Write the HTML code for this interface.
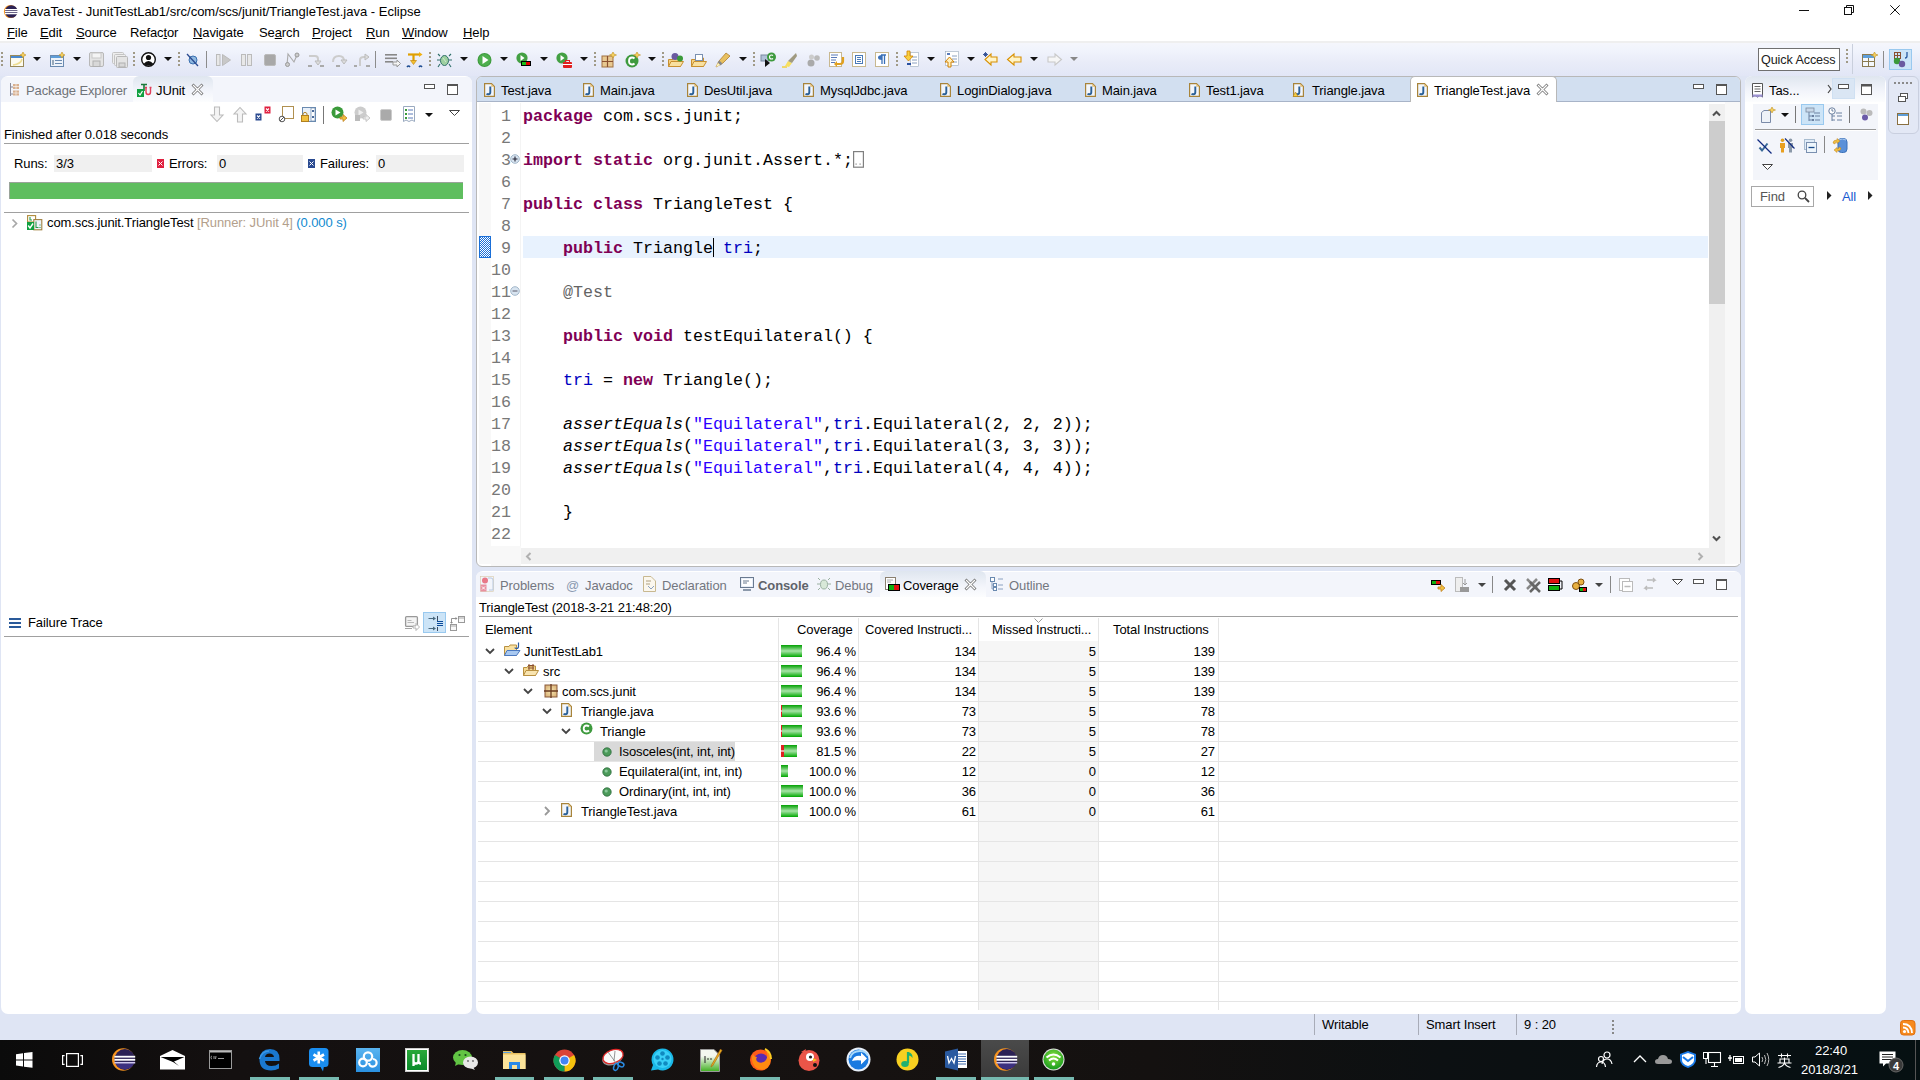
<!DOCTYPE html>
<html><head><meta charset="utf-8"><title>Eclipse</title>
<style>
*{margin:0;padding:0;box-sizing:border-box}
html,body{width:1920px;height:1080px;overflow:hidden;background:#dfe5f4;font-family:"Liberation Sans",sans-serif;font-size:13px;color:#000}
.a{position:absolute}
svg.a{overflow:visible}
.t{position:absolute;white-space:nowrap;line-height:16px;letter-spacing:-0.1px}
u{text-decoration:underline;text-underline-offset:1px}
.code{position:absolute;font-family:"Liberation Mono",monospace;font-size:16.67px;line-height:22px;white-space:pre;color:#000}
.ln{position:absolute;font-family:"Liberation Mono",monospace;font-size:16.67px;line-height:22px;color:#787878;white-space:pre;text-align:right}
.kw{color:#7f0055;font-weight:bold}
.fld{color:#0000c0}
.str{color:#2a00ff}
.it{font-style:italic}
.ann{color:#646464}
</style></head><body>
<div class="a" style="left:0px;top:0px;width:1920px;height:22px;background:#fff"></div>
<div class="a" style="left:0px;top:22px;width:1920px;height:19px;background:#fff"></div>
<svg class="a" style="left:3px;top:5px" width="16" height="14" viewBox="0 0 16 14"><circle cx="7.5" cy="6.5" r="6.6" fill="#f7941e"/><circle cx="8.3" cy="6.5" r="6.3" fill="#2c2255"/>
<rect x="2" y="4" width="13" height="1.3" fill="#fff"/><rect x="2" y="6" width="13" height="1.3" fill="#fff"/><rect x="2" y="8" width="13" height="1.3" fill="#fff"/></svg>
<div class="t" style="left:23px;top:4px;font-size:13px;line-height:16px;color:#000;font-family:'Liberation Sans',sans-serif;letter-spacing:0">JavaTest - JunitTestLab1/src/com/scs/junit/TriangleTest.java - Eclipse</div>
<div class="a" style="left:1799px;top:10px;width:10px;height:1px;background:#111"></div>
<svg class="a" style="left:1843px;top:4px" width="12" height="12" viewBox="0 0 12 12"><rect x="1.5" y="3.5" width="7" height="7" fill="none" stroke="#111"/><path fill="none" d="M3.5 3.5V1.5H10.5V8.5H8.5" stroke="#111"/></svg>
<svg class="a" style="left:1890px;top:5px" width="10" height="10" viewBox="0 0 10 10"><path fill="none" d="M0.3 0.3L9.7 9.7M9.7 0.3L0.3 9.7" stroke="#111" stroke-width="1"/></svg>
<div class="t" style="left:7px;top:25px;font-size:13px;line-height:16px;color:#000;font-family:'Liberation Sans',sans-serif;"><u>F</u>ile</div>
<div class="t" style="left:40px;top:25px;font-size:13px;line-height:16px;color:#000;font-family:'Liberation Sans',sans-serif;"><u>E</u>dit</div>
<div class="t" style="left:76px;top:25px;font-size:13px;line-height:16px;color:#000;font-family:'Liberation Sans',sans-serif;"><u>S</u>ource</div>
<div class="t" style="left:130px;top:25px;font-size:13px;line-height:16px;color:#000;font-family:'Liberation Sans',sans-serif;">Refac<u>t</u>or</div>
<div class="t" style="left:193px;top:25px;font-size:13px;line-height:16px;color:#000;font-family:'Liberation Sans',sans-serif;"><u>N</u>avigate</div>
<div class="t" style="left:259px;top:25px;font-size:13px;line-height:16px;color:#000;font-family:'Liberation Sans',sans-serif;">Se<u>a</u>rch</div>
<div class="t" style="left:312px;top:25px;font-size:13px;line-height:16px;color:#000;font-family:'Liberation Sans',sans-serif;"><u>P</u>roject</div>
<div class="t" style="left:366px;top:25px;font-size:13px;line-height:16px;color:#000;font-family:'Liberation Sans',sans-serif;"><u>R</u>un</div>
<div class="t" style="left:402px;top:25px;font-size:13px;line-height:16px;color:#000;font-family:'Liberation Sans',sans-serif;"><u>W</u>indow</div>
<div class="t" style="left:463px;top:25px;font-size:13px;line-height:16px;color:#000;font-family:'Liberation Sans',sans-serif;"><u>H</u>elp</div>
<div class="a" style="left:0px;top:41px;width:1920px;height:35px;background:linear-gradient(#f6f7fc 0%,#f0f3fc 30%,#e9ecf8 60%,#e2e6f6 100%)"></div>
<div class="a" style="left:0px;top:41px;width:1920px;height:2px;background:#efefef"></div>
<svg class="a" style="left:1px;top:52px" width="2" height="15" viewBox="0 0 2 15"><rect x="0" y="0" width="2" height="2" fill="#a09a86"/><rect x="0" y="4" width="2" height="2" fill="#a09a86"/><rect x="0" y="8" width="2" height="2" fill="#a09a86"/><rect x="0" y="12" width="2" height="2" fill="#a09a86"/></svg>
<svg class="a" style="left:133px;top:52px" width="2" height="15" viewBox="0 0 2 15"><rect x="0" y="0" width="2" height="2" fill="#a09a86"/><rect x="0" y="4" width="2" height="2" fill="#a09a86"/><rect x="0" y="8" width="2" height="2" fill="#a09a86"/><rect x="0" y="12" width="2" height="2" fill="#a09a86"/></svg>
<svg class="a" style="left:178px;top:52px" width="2" height="15" viewBox="0 0 2 15"><rect x="0" y="0" width="2" height="2" fill="#a09a86"/><rect x="0" y="4" width="2" height="2" fill="#a09a86"/><rect x="0" y="8" width="2" height="2" fill="#a09a86"/><rect x="0" y="12" width="2" height="2" fill="#a09a86"/></svg>
<svg class="a" style="left:429px;top:52px" width="2" height="15" viewBox="0 0 2 15"><rect x="0" y="0" width="2" height="2" fill="#a09a86"/><rect x="0" y="4" width="2" height="2" fill="#a09a86"/><rect x="0" y="8" width="2" height="2" fill="#a09a86"/><rect x="0" y="12" width="2" height="2" fill="#a09a86"/></svg>
<svg class="a" style="left:594px;top:52px" width="2" height="15" viewBox="0 0 2 15"><rect x="0" y="0" width="2" height="2" fill="#a09a86"/><rect x="0" y="4" width="2" height="2" fill="#a09a86"/><rect x="0" y="8" width="2" height="2" fill="#a09a86"/><rect x="0" y="12" width="2" height="2" fill="#a09a86"/></svg>
<svg class="a" style="left:662px;top:52px" width="2" height="15" viewBox="0 0 2 15"><rect x="0" y="0" width="2" height="2" fill="#a09a86"/><rect x="0" y="4" width="2" height="2" fill="#a09a86"/><rect x="0" y="8" width="2" height="2" fill="#a09a86"/><rect x="0" y="12" width="2" height="2" fill="#a09a86"/></svg>
<svg class="a" style="left:753px;top:52px" width="2" height="15" viewBox="0 0 2 15"><rect x="0" y="0" width="2" height="2" fill="#a09a86"/><rect x="0" y="4" width="2" height="2" fill="#a09a86"/><rect x="0" y="8" width="2" height="2" fill="#a09a86"/><rect x="0" y="12" width="2" height="2" fill="#a09a86"/></svg>
<svg class="a" style="left:896px;top:52px" width="2" height="15" viewBox="0 0 2 15"><rect x="0" y="0" width="2" height="2" fill="#a09a86"/><rect x="0" y="4" width="2" height="2" fill="#a09a86"/><rect x="0" y="8" width="2" height="2" fill="#a09a86"/><rect x="0" y="12" width="2" height="2" fill="#a09a86"/></svg>
<div class="a" style="left:206px;top:51px;width:1px;height:17px;background:#8c8c8c"></div>
<div class="a" style="left:375px;top:51px;width:1px;height:17px;background:#8c8c8c"></div>
<svg class="a" style="left:33px;top:57px" width="8" height="5" viewBox="0 0 8 5"><path d="M0 0H8L4 4Z" fill="#111"/></svg>
<svg class="a" style="left:73px;top:57px" width="8" height="5" viewBox="0 0 8 5"><path d="M0 0H8L4 4Z" fill="#111"/></svg>
<svg class="a" style="left:164px;top:57px" width="8" height="5" viewBox="0 0 8 5"><path d="M0 0H8L4 4Z" fill="#111"/></svg>
<svg class="a" style="left:460px;top:57px" width="8" height="5" viewBox="0 0 8 5"><path d="M0 0H8L4 4Z" fill="#111"/></svg>
<svg class="a" style="left:500px;top:57px" width="8" height="5" viewBox="0 0 8 5"><path d="M0 0H8L4 4Z" fill="#111"/></svg>
<svg class="a" style="left:540px;top:57px" width="8" height="5" viewBox="0 0 8 5"><path d="M0 0H8L4 4Z" fill="#111"/></svg>
<svg class="a" style="left:580px;top:57px" width="8" height="5" viewBox="0 0 8 5"><path d="M0 0H8L4 4Z" fill="#111"/></svg>
<svg class="a" style="left:648px;top:57px" width="8" height="5" viewBox="0 0 8 5"><path d="M0 0H8L4 4Z" fill="#111"/></svg>
<svg class="a" style="left:739px;top:57px" width="8" height="5" viewBox="0 0 8 5"><path d="M0 0H8L4 4Z" fill="#111"/></svg>
<svg class="a" style="left:927px;top:57px" width="8" height="5" viewBox="0 0 8 5"><path d="M0 0H8L4 4Z" fill="#111"/></svg>
<svg class="a" style="left:967px;top:57px" width="8" height="5" viewBox="0 0 8 5"><path d="M0 0H8L4 4Z" fill="#111"/></svg>
<svg class="a" style="left:1030px;top:57px" width="8" height="5" viewBox="0 0 8 5"><path d="M0 0H8L4 4Z" fill="#111"/></svg>
<svg class="a" style="left:1070px;top:57px" width="8" height="5" viewBox="0 0 8 5"><path d="M0 0H8L4 4Z" fill="#888"/></svg>
<svg class="a" style="left:10px;top:52px" width="16" height="16" viewBox="0 0 16 16"><rect x="0.5" y="3.5" width="13" height="11" fill="#fdfbf0" stroke="#9a8a5a"/><rect x="1" y="4" width="12" height="2" fill="#4a8ad0"/><path d="M13 0L14.2 2.3L16 3L14.2 3.7L13 6L11.8 3.7L10 3L11.8 2.3Z" fill="#f5d060" stroke="#c09020" stroke-width="0.6"/><path d="M3 13Q11 12 12 7" stroke="#eedc90" fill="none" stroke-width="1.5"/></svg>
<svg class="a" style="left:50px;top:52px" width="16" height="16" viewBox="0 0 16 16"><rect x="0.5" y="3.5" width="13" height="11" fill="#eef3fa" stroke="#6a8ab0"/><rect x="1" y="4" width="12" height="2" fill="#5f9ed8"/><rect x="5" y="8" width="7" height="1" fill="#6a8ab0"/><rect x="5" y="11" width="7" height="1" fill="#6a8ab0"/><rect x="2" y="8" width="2" height="5" fill="#9ab"/><path d="M12 0L13.2 2.3L15 3L13.2 3.7L12 6L10.8 3.7L9 3L10.8 2.3Z" fill="#f5d060" stroke="#c09020" stroke-width="0.6"/></svg>
<svg class="a" style="left:89px;top:52px" width="16" height="16" viewBox="0 0 16 16"><rect x="0.5" y="0.5" width="14" height="14" rx="1.5" fill="#e4e4e4" stroke="#b8b8b8"/><rect x="3" y="1" width="9" height="5" fill="#f4f4f4" stroke="#c8c8c8"/><rect x="4" y="9" width="7" height="5.5" fill="#d8d8d8" stroke="#b0b0b0"/></svg>
<svg class="a" style="left:112px;top:52px" width="16" height="16" viewBox="0 0 16 16"><rect x="0.5" y="0.5" width="11" height="11" rx="1" fill="#eee" stroke="#c4c4c4"/><rect x="2.5" y="2.5" width="11" height="11" rx="1" fill="#eee" stroke="#c4c4c4"/><rect x="4.5" y="4.5" width="11" height="11" rx="1" fill="#e4e4e4" stroke="#b8b8b8"/><rect x="7" y="11" width="6" height="4" fill="#d8d8d8" stroke="#b0b0b0"/></svg>
<svg class="a" style="left:141px;top:52px" width="16" height="16" viewBox="0 0 16 16"><circle cx="7.5" cy="7.5" r="6.8" fill="#fff" stroke="#111" stroke-width="1.4"/><circle cx="7.5" cy="5.5" r="2.6" fill="#111"/><path d="M2.5 12Q7.5 6 12.5 12Q7.5 15.5 2.5 12Z" fill="#111"/></svg>
<svg class="a" style="left:186px;top:52px" width="14" height="16" viewBox="0 0 14 16"><circle cx="7" cy="8" r="4" fill="#8fb8e0" stroke="#3a70b0"/><path fill="none" d="M1 2L12 14" stroke="#2a4a90" stroke-width="1.3"/></svg>
<svg class="a" style="left:216px;top:53px" width="16" height="14" viewBox="0 0 16 14"><rect x="0.5" y="1.5" width="3.5" height="11" fill="#e8e8e8" stroke="#bbb"/><path d="M6.5 1.5L14.5 7L6.5 12.5Z" fill="#c8c8c8" stroke="#bbb"/></svg>
<svg class="a" style="left:241px;top:53px" width="12" height="14" viewBox="0 0 12 14"><rect x="0.5" y="1.5" width="4" height="11" fill="#e8e8e8" stroke="#bbb"/><rect x="6.5" y="1.5" width="4" height="11" fill="#e8e8e8" stroke="#bbb"/></svg>
<svg class="a" style="left:264px;top:53px" width="12" height="14" viewBox="0 0 12 14"><rect x="0.5" y="1.5" width="11" height="11" rx="1.5" fill="#a8a8a8" stroke="#bbb"/></svg>
<svg class="a" style="left:285px;top:52px" width="15" height="15" viewBox="0 0 15 15"><path d="M2 13L3 2L9 10L12 3" stroke="#aaa" fill="none" stroke-width="1.1"/><circle cx="2.5" cy="12.5" r="2" fill="#ccc" stroke="#999"/><circle cx="12" cy="3" r="2" fill="#ccc" stroke="#999"/></svg>
<svg class="a" style="left:308px;top:53px" width="16" height="14" viewBox="0 0 16 14"><path d="M1 3H7Q10 3 10 6V9" stroke="#ccc" fill="none" stroke-width="2"/><path d="M7 8L10 12L13 8Z" fill="#ddd" stroke="#bbb"/><rect x="0" y="12" width="4" height="2" fill="#aaa"/><rect x="12" y="12" width="4" height="2" fill="#aaa"/></svg>
<svg class="a" style="left:331px;top:53px" width="16" height="14" viewBox="0 0 16 14"><path d="M2 9Q2 3 8 3Q13 3 13 8" stroke="#ccc" fill="none" stroke-width="2"/><path d="M10 7L13 11L16 7Z" fill="#ddd" stroke="#bbb"/><rect x="5" y="12" width="4" height="2" fill="#aaa"/></svg>
<svg class="a" style="left:354px;top:53px" width="16" height="14" viewBox="0 0 16 14"><path d="M6 13V7Q6 4 10 4H12" stroke="#ccc" fill="none" stroke-width="2"/><path d="M11 1L15 4L11 7Z" fill="#ddd" stroke="#bbb"/><rect x="0" y="12" width="3" height="2" fill="#aaa"/><rect x="12" y="12" width="4" height="2" fill="#aaa"/></svg>
<svg class="a" style="left:385px;top:52px" width="16" height="16" viewBox="0 0 16 16"><rect x="0" y="2" width="12" height="1.6" fill="#888"/><rect x="0" y="5.5" width="12" height="1.6" fill="#888"/><rect x="0" y="9" width="8" height="1.6" fill="#888"/><path d="M8 10H12V8L15.5 11.5L12 15V13H8Z" fill="#f4f4f4" stroke="#999"/></svg>
<svg class="a" style="left:407px;top:52px" width="16" height="16" viewBox="0 0 16 16"><path fill="none" d="M1 2.5H12" stroke="#e0a000" stroke-width="2.2"/><path d="M12 0L15.5 2.5L12 5Z" fill="#f0b010"/><path fill="none" d="M6.5 2.5V10" stroke="#e0a000" stroke-width="2.2"/><path d="M3.5 8.5H9.5L6.5 12.5Z" fill="#f4c030" stroke="#c08000" stroke-width="0.6"/><path d="M0 15Q1.5 13 3 15M12 15Q13.5 13 15 15" stroke="#1a4a90" stroke-width="1.5" fill="none"/></svg>
<svg class="a" style="left:437px;top:52px" width="16" height="16" viewBox="0 0 16 16"><ellipse cx="7.5" cy="8.5" rx="4" ry="5" fill="#9ed0a0" stroke="#2f6f6a"/><path fill="none" d="M3 4L1 2M12 4L14 2M3 8H0M12 8H15M3 12L1 15M12 12L14 15" stroke="#2f6f6a" stroke-width="1.1"/><path fill="none" d="M6 6L9 10" stroke="#cfe8cf"/></svg>
<svg class="a" style="left:477px;top:52px" width="16" height="16" viewBox="0 0 16 16"><circle cx="7.5" cy="8" r="7" fill="#3d9a3d"/><circle cx="7.5" cy="8" r="6" fill="#4eaf4e"/><path d="M5.5 4L11.5 8L5.5 12Z" fill="#fff"/></svg>
<svg class="a" style="left:516px;top:52px" width="16" height="16" viewBox="0 0 16 16"><circle cx="6" cy="6" r="5.6" fill="#43a043"/><path d="M4.5 3L8.5 6L4.5 9Z" fill="#fff"/><rect x="5" y="9" width="10" height="5" fill="#000"/><rect x="6" y="10" width="4" height="3" fill="#19c019"/><rect x="10" y="10" width="4" height="3" fill="#e00000"/></svg>
<svg class="a" style="left:556px;top:52px" width="16" height="16" viewBox="0 0 16 16"><circle cx="6" cy="6" r="5.6" fill="#43a043"/><path d="M4.5 3L8.5 6L4.5 9Z" fill="#fff"/><rect x="7" y="10" width="9" height="6" rx="1" fill="#e02020"/><rect x="9.5" y="8.5" width="4" height="2" fill="none" stroke="#e02020"/><rect x="7" y="12" width="9" height="1" fill="#fff"/></svg>
<svg class="a" style="left:601px;top:52px" width="16" height="16" viewBox="0 0 16 16"><rect x="1" y="4" width="11" height="11" fill="#e8c890" stroke="#a07040"/><path fill="none" d="M1 9.5H12M6.5 4V15" stroke="#8a5030" stroke-width="1.2"/><path d="M12 0L13.3 2.3L15.5 3L13.3 3.7L12 6L10.7 3.7L8.5 3L10.7 2.3Z" fill="#f5d060" stroke="#c09020" stroke-width="0.6"/></svg>
<svg class="a" style="left:625px;top:52px" width="16" height="16" viewBox="0 0 16 16"><circle cx="7" cy="9" r="6.5" fill="#3e9a3e"/><path d="M9.5 6.5Q8.5 5.5 7 5.5Q4 5.5 4 9Q4 12.5 7 12.5Q8.5 12.5 9.5 11.5" stroke="#fff" stroke-width="1.8" fill="none"/><path d="M12 0L13.3 2.3L15.5 3L13.3 3.7L12 6L10.7 3.7L8.5 3L10.7 2.3Z" fill="#f5d060" stroke="#c09020" stroke-width="0.6"/></svg>
<svg class="a" style="left:668px;top:52px" width="16" height="16" viewBox="0 0 16 16"><path d="M0.5 7.5H5L6 6H12.5V14.5H0.5Z" fill="#f4d080" stroke="#c89030"/><path d="M0.5 14.5L3 9.5H15.5L12.5 14.5Z" fill="#f8e0a0" stroke="#c89030"/><circle cx="7" cy="4.5" r="3.5" fill="#6a5aa0"/><circle cx="12" cy="6.5" r="3" fill="#3a9a3a"/></svg>
<svg class="a" style="left:691px;top:52px" width="16" height="16" viewBox="0 0 16 16"><path d="M0.5 7.5H5L6 6H12.5V14.5H0.5Z" fill="#f4d080" stroke="#c89030"/><path d="M0.5 14.5L3 9.5H15.5L12.5 14.5Z" fill="#f8e0a0" stroke="#c89030"/><rect x="4.5" y="2.5" width="7" height="6" fill="#fff" stroke="#7a90b0"/></svg>
<svg class="a" style="left:715px;top:52px" width="16" height="16" viewBox="0 0 16 16"><path d="M1 15L4 9L11 1L15 4L8 11Z" fill="#e8c060" stroke="#b08030" stroke-width="0.8"/><path fill="none" d="M3.5 9.5L6.5 12.5" stroke="#888" stroke-width="2.5"/><path d="M1 15L3 11L5 13Z" fill="#fff8c0"/></svg>
<svg class="a" style="left:760px;top:52px" width="16" height="16" viewBox="0 0 16 16"><rect x="1" y="3" width="8" height="6" fill="#b0c0d8" stroke="#7a8aa0"/><path d="M5 7L5 15L10 11Z" fill="#111"/><circle cx="11.5" cy="5" r="4.5" fill="#3e9a3e"/><path d="M13 3.5Q12.5 3 11.5 3Q9.5 3 9.5 5Q9.5 7 11.5 7Q12.5 7 13 6.5" stroke="#fff" stroke-width="1.1" fill="none"/></svg>
<svg class="a" style="left:782px;top:52px" width="16" height="16" viewBox="0 0 16 16"><path fill="none" d="M0 15H5" stroke="#f0d040" stroke-width="1.5"/><path d="M3 14L6 9L10 11L7 15Z" fill="#f8e060"/><path d="M6 9L14 1L15 4L10 11Z" fill="#a09a80"/></svg>
<svg class="a" style="left:807px;top:53px" width="14" height="14" viewBox="0 0 14 14"><circle cx="4" cy="10" r="3.5" fill="#aaa"/><circle cx="4.5" cy="4" r="2.5" fill="#ccc"/><circle cx="10" cy="5" r="2.8" fill="#bbb"/></svg>
<svg class="a" style="left:829px;top:52px" width="16" height="16" viewBox="0 0 16 16"><rect x="0.5" y="0.5" width="12" height="14" fill="#fff" stroke="#c8b890"/><path fill="none" d="M2 3H9M2 5.5H8M2 8H7M2 10.5H6" stroke="#5a7ab8"/><path d="M14 5V9Q14 12 11 12H7" stroke="#e0a020" stroke-width="2.2" fill="none"/><path d="M8 9L5 12L8 15Z" fill="#e0a020"/></svg>
<svg class="a" style="left:852px;top:52px" width="15" height="16" viewBox="0 0 15 16"><rect x="0.5" y="0.5" width="13" height="14" fill="#fff" stroke="#c8b890"/><rect x="3.5" y="3.5" width="7" height="8" fill="none" stroke="#4a7ab8"/><path fill="none" d="M5 5.5H9M5 7.5H9M5 9.5H9" stroke="#4a7ab8"/></svg>
<svg class="a" style="left:875px;top:52px" width="15" height="16" viewBox="0 0 15 16"><rect x="0.5" y="0.5" width="13" height="14" fill="#fff" stroke="#c8b890"/><path fill="none" d="M6 3H11M7 3V12M9.5 3V12" stroke="#3a70b8" stroke-width="1.3"/><path d="M7 3Q3 3 3 5.5Q3 8 7 8" fill="#3a70b8"/></svg>
<svg class="a" style="left:903px;top:51px" width="16" height="17" viewBox="0 0 16 17"><rect x="7.5" y="1.5" width="8" height="14" fill="#fff" stroke="#9aaabb" stroke-width="0.6"/><path fill="none" d="M9 6H14M9 9H14M9 12H14" stroke="#8aa0c0"/><path d="M4 0H7V5H10L5.5 10L1 5H4Z" fill="#f8d040" stroke="#d08000" stroke-width="0.8"/><rect x="4" y="12" width="4" height="2" fill="#2a50a0"/></svg>
<svg class="a" style="left:944px;top:51px" width="16" height="17" viewBox="0 0 16 17"><rect x="1.5" y="0.5" width="13" height="14" fill="#fff" stroke="#9aaabb" stroke-width="0.6"/><rect x="3" y="2" width="3" height="2" fill="#5a7ab8"/><path fill="none" d="M8 5H13M8 8H13M8 11H13" stroke="#8aa0c0"/><path d="M4 16V11H1L5.5 6L10 11H7V16Z" fill="#fff0c0" stroke="#d08000" stroke-width="1"/></svg>
<svg class="a" style="left:982px;top:52px" width="16" height="14" viewBox="0 0 16 14"><path d="M15 5H9V2L3 7.5L9 13V10H15Z" fill="#fff4c8" stroke="#d89000" stroke-width="1.1"/><path fill="none" d="M2 1L5 4M5 1L2 4M3.5 0V5M1 2.5H6" stroke="#2a4a90" stroke-width="0.9"/></svg>
<svg class="a" style="left:1006px;top:52px" width="16" height="14" viewBox="0 0 16 14"><path d="M15 5H8V2L1.5 7.5L8 13V10H15Z" fill="#fff4c8" stroke="#d89000" stroke-width="1.1"/></svg>
<svg class="a" style="left:1047px;top:52px" width="16" height="14" viewBox="0 0 16 14"><path d="M1 5H8V2L14.5 7.5L8 13V10H1Z" fill="#f6f6f6" stroke="#c8c8c8" stroke-width="1.1"/></svg>
<div class="a" style="left:1758px;top:48px;width:82px;height:23px;background:#fff;border:1px solid #707070"></div>
<div class="t" style="left:1761px;top:52px;font-size:12.6px;line-height:16px;color:#222;font-family:'Liberation Sans',sans-serif;">Quick Access</div>
<svg class="a" style="left:1846px;top:49px" width="2" height="15" viewBox="0 0 2 15"><rect x="0" y="0" width="2" height="2" fill="#a09a86"/><rect x="0" y="4" width="2" height="2" fill="#a09a86"/><rect x="0" y="8" width="2" height="2" fill="#a09a86"/><rect x="0" y="12" width="2" height="2" fill="#a09a86"/></svg>
<div class="a" style="left:1852px;top:44px;width:1px;height:30px;background:#c9cfdc"></div>
<svg class="a" style="left:1862px;top:52px" width="16" height="16" viewBox="0 0 16 16"><rect x="0.5" y="2.5" width="12" height="12" fill="#f4f8fc" stroke="#8a7a50"/><rect x="1" y="3" width="11" height="3" fill="#5f9ed8"/><path fill="none" d="M1 9.5H12M6.5 6V14" stroke="#8a7a50"/><path d="M12.5 0L13.7 2.3L16 3L13.7 3.7L12.5 6L11.3 3.7L9 3L11.3 2.3Z" fill="#f5d060" stroke="#c09020" stroke-width="0.6"/></svg>
<div class="a" style="left:1883px;top:51px;width:1px;height:17px;background:#8c8c8c"></div>
<div class="a" style="left:1889px;top:49px;width:23px;height:21px;background:#cce4f7;border:1px solid #99c9ef"></div>
<svg class="a" style="left:1893px;top:52px" width="16" height="16" viewBox="0 0 16 16"><rect x="1.5" y="0.5" width="6" height="6" fill="none" stroke="#8a5030"/><path fill="none" d="M1.5 3.5H7.5M4.5 0.5V6.5" stroke="#8a5030"/><path d="M14 0V4Q14 6 12 6" stroke="#2a5aa0" stroke-width="1.3" fill="none"/><circle cx="4" cy="9" r="3.2" fill="#3a9a3a"/><circle cx="9" cy="12" r="3.2" fill="#6a5aa0"/></svg>
<div class="a" style="left:1px;top:76px;width:471px;height:938px;background:#fff;border-radius:7px 7px 7px 7px;overflow:hidden"><div class="a" style="left:0px;top:1px;width:471px;height:25px;background:#f3f5fb"></div>
<div class="a" style="left:132px;top:0px;width:80px;height:26px;background:linear-gradient(#dfe6ef,#f3f5fb 60%,#fcfdfe);border-radius:6px 6px 0 0"></div>
</div>
<svg class="a" style="left:10px;top:83px" width="10" height="14" viewBox="0 0 10 14"><path fill="none" d="M0.5 0V13M0.5 4H3M0.5 11H3" stroke="#8a8a9a"/><rect x="3" y="1" width="6" height="5" fill="#d8b090"/><rect x="3" y="7.5" width="6" height="5" fill="#d8b090"/><path fill="none" d="M3 3.5H9M6 1V6M3 10H9M6 7.5V12.5" stroke="#fff" stroke-width="0.6"/></svg>
<div class="t" style="left:26px;top:83px;font-size:13px;line-height:16px;color:#6f7378;font-family:'Liberation Sans',sans-serif;">Package Explorer</div>
<svg class="a" style="left:137px;top:82px" width="16" height="16" viewBox="0 0 16 16"><path fill="none" d="M4 2.5H10M7 2.5V9" stroke="#1a7a3a" stroke-width="1.6"/><rect x="0.5" y="7.5" width="6" height="7" fill="#10a040" stroke="#10a040" stroke-width="1"/><path fill="none" d="M1.5 11L3 13L5.5 9" stroke="#fff" stroke-width="1.2"/><path fill="none" d="M9 5.5V10Q9 12.5 11.2 12.5Q13.5 12.5 13.5 10V5.5M8 5.5H10M12.5 5.5H14.5" stroke="#e0405a" stroke-width="1.4"/></svg>
<div class="t" style="left:156px;top:83px;font-size:13px;line-height:16px;color:#000;font-family:'Liberation Sans',sans-serif;">JUnit</div>
<svg class="a" style="left:192px;top:84px" width="11" height="11" viewBox="0 0 11 11"><path fill="none" d="M1.5 1.5L9.5 9.5M9.5 1.5L1.5 9.5" stroke="#707070" stroke-width="2.8" stroke-linecap="square"/><path fill="none" d="M1.5 1.5L9.5 9.5M9.5 1.5L1.5 9.5" stroke="#fff" stroke-width="1.3" stroke-linecap="square"/></svg>
<div class="a" style="left:424px;top:84px;width:11px;height:5px;border:1px solid #555;background:#fff"></div>
<svg class="a" style="left:447px;top:84px" width="11" height="11" viewBox="0 0 11 11"><rect x="0.5" y="0.5" width="10" height="10" fill="#fff" stroke="#555"/><rect x="1" y="1" width="9" height="1" fill="#555"/></svg>
<svg class="a" style="left:210px;top:106px" width="14" height="17" viewBox="0 0 14 17"><path d="M4.5 1H9.5V9H13L7 15.5L1 9H4.5Z" fill="#f4f4f4" stroke="#bbb" stroke-width="1.1"/></svg>
<svg class="a" style="left:233px;top:106px" width="14" height="17" viewBox="0 0 14 17"><path d="M4.5 16H9.5V8H13L7 1.5L1 8H4.5Z" fill="#f4f4f4" stroke="#bbb" stroke-width="1.1"/></svg>
<svg class="a" style="left:255px;top:106px" width="17" height="17" viewBox="0 0 17 17"><rect x="0.5" y="7.5" width="6" height="7" fill="#2a4a90"/><path fill="none" d="M2 9.5L5 12.5M5 9.5L2 12.5" stroke="#fff" stroke-width="1.1"/><rect x="9.5" y="0.5" width="6" height="7" fill="#e02040"/><path fill="none" d="M11 2.5L14 5.5M14 2.5L11 5.5" stroke="#fff" stroke-width="1.1"/></svg>
<svg class="a" style="left:278px;top:106px" width="17" height="17" viewBox="0 0 17 17"><rect x="4.5" y="0.5" width="11" height="12" fill="#fff" stroke="#b09050"/><circle cx="4" cy="13" r="2.8" fill="#fff" stroke="#555"/><path fill="none" d="M2 15L6 11" stroke="#555"/></svg>
<svg class="a" style="left:301px;top:106px" width="17" height="17" viewBox="0 0 17 17"><rect x="1.5" y="1.5" width="13" height="14" fill="#e8f0fa" stroke="#6a8ab0"/><rect x="10" y="2" width="4" height="13" fill="#fff" stroke="#6a8ab0" stroke-width="0.7"/><rect x="11" y="4" width="2" height="2" fill="#4a6a9a"/><rect x="11" y="10" width="2" height="2" fill="#4a6a9a"/><rect x="0.5" y="9.5" width="7" height="6" fill="#f0c040" stroke="#b08020"/><path d="M2 9.5V7.5Q4 5 6 7.5V9.5" stroke="#b08020" fill="none"/></svg>
<div class="a" style="left:323px;top:106px;width:1px;height:18px;background:#777"></div>
<svg class="a" style="left:331px;top:106px" width="17" height="17" viewBox="0 0 17 17"><circle cx="6.5" cy="6.5" r="6" fill="#3a9a3a"/><path d="M4.5 3.5L9.5 6.5L4.5 9.5Z" fill="#fff"/><path d="M9 11H12V8.5L16 12L12 15.5V13H9Z" fill="#f0c040" stroke="#c08020" stroke-width="0.8"/></svg>
<svg class="a" style="left:354px;top:106px" width="17" height="17" viewBox="0 0 17 17"><circle cx="6.5" cy="6.5" r="6" fill="#ccc"/><path d="M4.5 3.5L9.5 6.5L4.5 9.5Z" fill="#eee"/><rect x="1" y="9" width="5" height="6" fill="#bbb"/><path d="M9 11H12V8.5L16 12L12 15.5V13H9Z" fill="#eee" stroke="#bbb" stroke-width="0.8"/></svg>
<svg class="a" style="left:380px;top:109px" width="12" height="12" viewBox="0 0 12 12"><rect x="0.5" y="0.5" width="11" height="11" rx="1.5" fill="#aaa" stroke="#ccc"/></svg>
<svg class="a" style="left:403px;top:106px" width="13" height="17" viewBox="0 0 13 17"><path d="M0.5 0.5H11.5V15.5L9 14L6 15.5L3 14L0.5 15.5Z" fill="#fff" stroke="#9aaac0"/><rect x="2" y="3" width="2" height="2" fill="#3a9a3a"/><rect x="2" y="7" width="2" height="2" fill="#3a9a3a"/><rect x="2" y="11" width="2" height="2" fill="#3a9a3a"/><path fill="none" d="M5 4H10M5 8H10M5 12H10" stroke="#5a7ab8"/></svg>
<svg class="a" style="left:425px;top:113px" width="8" height="5" viewBox="0 0 8 5"><path d="M0 0H8L4 4Z" fill="#111"/></svg>
<svg class="a" style="left:449px;top:110px" width="11" height="6" viewBox="0 0 11 6"><path d="M0.5 0.5H10.5L5.5 5.5Z" fill="#fff" stroke="#444"/></svg>
<div class="t" style="left:4px;top:127px;font-size:13px;line-height:16px;color:#000;font-family:'Liberation Sans',sans-serif;">Finished after 0.018 seconds</div>
<div class="a" style="left:4px;top:143px;width:465px;height:1px;background:#a0a0a0"></div>
<div class="t" style="left:14px;top:156px;font-size:13px;line-height:16px;color:#000;font-family:'Liberation Sans',sans-serif;">Runs:</div>
<div class="a" style="left:54px;top:155px;width:98px;height:17px;background:#f0f0f0"></div>
<div class="t" style="left:56px;top:156px;font-size:13px;line-height:16px;color:#000;font-family:'Liberation Sans',sans-serif;">3/3</div>
<svg class="a" style="left:157px;top:159px" width="7" height="9" viewBox="0 0 7 9"><rect x="0" y="0" width="7" height="9" fill="#e02040"/><path fill="none" d="M1.5 2.5L5.5 6.5M5.5 2.5L1.5 6.5" stroke="#fff" stroke-width="1"/></svg>
<div class="t" style="left:169px;top:156px;font-size:13px;line-height:16px;color:#000;font-family:'Liberation Sans',sans-serif;">Errors:</div>
<div class="a" style="left:217px;top:155px;width:86px;height:17px;background:#f0f0f0"></div>
<div class="t" style="left:219px;top:156px;font-size:13px;line-height:16px;color:#000;font-family:'Liberation Sans',sans-serif;">0</div>
<svg class="a" style="left:308px;top:159px" width="7" height="9" viewBox="0 0 7 9"><rect x="0" y="0" width="7" height="9" fill="#2a4a90"/><path fill="none" d="M1.5 2.5L5.5 6.5M5.5 2.5L1.5 6.5" stroke="#fff" stroke-width="1"/></svg>
<div class="t" style="left:320px;top:156px;font-size:13px;line-height:16px;color:#000;font-family:'Liberation Sans',sans-serif;">Failures:</div>
<div class="a" style="left:376px;top:155px;width:88px;height:17px;background:#f0f0f0"></div>
<div class="t" style="left:378px;top:156px;font-size:13px;line-height:16px;color:#000;font-family:'Liberation Sans',sans-serif;">0</div>
<div class="a" style="left:9px;top:182px;width:454px;height:17px;background:#5fbe5f;border-top:1px solid #9aa49a;border-left:1px solid #9aa49a"></div>
<div class="a" style="left:4px;top:212px;width:465px;height:1px;background:#a0a0a0"></div>
<svg class="a" style="left:11px;top:218px" width="8" height="11" viewBox="0 0 8 11"><path d="M1.5 1.5L5.5 5.5L1.5 9.5" stroke="#a8a8a8" stroke-width="1.7" fill="none"/></svg>
<svg class="a" style="left:27px;top:215px" width="16" height="16" viewBox="0 0 16 16"><rect x="0.6" y="0.6" width="8" height="6.4" fill="#fff" stroke="#b08a3a" stroke-width="1.1"/><path d="M3 2V5H5" stroke="#2a9a4a" stroke-width="1.1" fill="none"/><rect x="6.8" y="4.6" width="8" height="10.2" fill="#eef2fa" stroke="#a08040" stroke-width="1.1"/><path d="M9 6.5V12.5H11.5M13 9.5V10.5M13 12V13" stroke="#2a9a4a" stroke-width="1.1" fill="none"/><rect x="0" y="7" width="7" height="8" fill="#10a040"/><path d="M1.2 10.5L3 13L6 8.5" stroke="#fff" stroke-width="1.4" fill="none"/></svg>
<div class="t" style="left:47px;top:215px;font-size:13px;line-height:16px;color:#000;font-family:'Liberation Sans',sans-serif;">com.scs.junit.TriangleTest <span style="color:#b3a08c">[Runner: JUnit 4]</span> <span style="color:#0f8ad0">(0.000 s)</span></div>
<svg class="a" style="left:9px;top:617px" width="12" height="12" viewBox="0 0 12 12"><rect x="0" y="1" width="12" height="2" fill="#2a5a9a"/><rect x="0" y="5" width="12" height="2" fill="#2a5a9a"/><rect x="0" y="9" width="12" height="2" fill="#2a5a9a"/></svg>
<div class="t" style="left:28px;top:615px;font-size:13px;line-height:16px;color:#000;font-family:'Liberation Sans',sans-serif;">Failure Trace</div>
<svg class="a" style="left:404px;top:614px" width="16" height="18" viewBox="0 0 16 18"><rect x="1.6" y="2.6" width="11.8" height="9.8" rx="1" fill="#f4f4f4" stroke="#999" stroke-width="1.3"/><path fill="none" d="M3.5 6.5H7.5M3.5 8.5H10" stroke="#aaa" stroke-width="0.8"/><path fill="none" d="M1 14.5H8" stroke="#999" stroke-width="0.9"/><path d="M9 12H12V9.5L15.5 13L12 16.5V14H9Z" fill="#fff" stroke="#aaa" stroke-width="0.9"/></svg>
<div class="a" style="left:423px;top:612px;width:23px;height:21px;background:#cce4f7;border:1px solid #99c9ef"></div>
<svg class="a" style="left:424px;top:613px" width="21" height="19" viewBox="0 0 21 19"><path fill="none" d="M4.5 5.5H10M4.5 15.5H10" stroke="#4a6a80" stroke-width="1.1"/><path d="M9 3.5L12 5.5L9 7.5ZM9 13.5L12 15.5L9 17.5Z" fill="#4a6a80"/><path fill="none" d="M13.5 3V8M13.5 14V18" stroke="#3a4a60" stroke-width="1"/><path fill="none" d="M13 8.5H19M13 10.5H19M13 12.5H19" stroke="#0a4a9a" stroke-width="1.1"/></svg>
<svg class="a" style="left:449px;top:614px" width="17" height="18" viewBox="0 0 17 18"><rect x="9.5" y="2.5" width="6" height="6" fill="#f8f8f8" stroke="#999"/><path fill="none" d="M10 4H15" stroke="#aaa" stroke-width="1"/><rect x="1.5" y="10.5" width="6" height="6" fill="#f8f8f8" stroke="#999"/><path fill="none" d="M2 12H7" stroke="#aaa" stroke-width="1"/><path d="M2.5 8.5V4.5H7" stroke="#888" stroke-width="0.9" fill="none"/><path d="M6.5 3L8.5 4.5L6.5 6ZM1 8L2.5 9.8L4 8Z" fill="#888"/></svg>
<div class="a" style="left:4px;top:636px;width:465px;height:1px;background:#a0a0a0"></div>
<div class="a" style="left:476px;top:76px;width:1265px;height:491px;background:#fff;border:1px solid #b8b8b8;border-radius:6px;overflow:hidden"><div class="a" style="left:0px;top:0px;width:1263px;height:25px;background:#d2dff0;border-bottom:1px solid #a8b4c8"></div>
</div>
<div class="a" style="left:1410px;top:76px;width:147px;height:26px;background:#fff;border:1px solid #b8b8b8;border-bottom:none;border-radius:5px 5px 0 0"></div>
<svg class="a" style="left:484px;top:83px" width="11" height="14" viewBox="0 0 11 14"><path d="M0.6 0.6H7.5L10.4 3.5V13.4H0.6Z" fill="#f2f6fc" stroke="#a8843a" stroke-width="1.2"/><path d="M7.3 0.8V3.7H10.2Z" fill="#e8c070"/><path fill="none" d="M6.3 3.5V9.2Q6.3 11.3 4.3 11.3Q3.2 11.3 2.6 10.6" stroke="#2a6098" stroke-width="1.9"/></svg>
<div class="t" style="left:501px;top:83px;font-size:13px;line-height:16px;color:#000;font-family:'Liberation Sans',sans-serif;">Test.java</div>
<svg class="a" style="left:583px;top:83px" width="11" height="14" viewBox="0 0 11 14"><path d="M0.6 0.6H7.5L10.4 3.5V13.4H0.6Z" fill="#f2f6fc" stroke="#a8843a" stroke-width="1.2"/><path d="M7.3 0.8V3.7H10.2Z" fill="#e8c070"/><path fill="none" d="M6.3 3.5V9.2Q6.3 11.3 4.3 11.3Q3.2 11.3 2.6 10.6" stroke="#2a6098" stroke-width="1.9"/></svg>
<div class="t" style="left:600px;top:83px;font-size:13px;line-height:16px;color:#000;font-family:'Liberation Sans',sans-serif;">Main.java</div>
<svg class="a" style="left:687px;top:83px" width="11" height="14" viewBox="0 0 11 14"><path d="M0.6 0.6H7.5L10.4 3.5V13.4H0.6Z" fill="#f2f6fc" stroke="#a8843a" stroke-width="1.2"/><path d="M7.3 0.8V3.7H10.2Z" fill="#e8c070"/><path fill="none" d="M6.3 3.5V9.2Q6.3 11.3 4.3 11.3Q3.2 11.3 2.6 10.6" stroke="#2a6098" stroke-width="1.9"/></svg>
<div class="t" style="left:704px;top:83px;font-size:13px;line-height:16px;color:#000;font-family:'Liberation Sans',sans-serif;">DesUtil.java</div>
<svg class="a" style="left:803px;top:83px" width="11" height="14" viewBox="0 0 11 14"><path d="M0.6 0.6H7.5L10.4 3.5V13.4H0.6Z" fill="#f2f6fc" stroke="#a8843a" stroke-width="1.2"/><path d="M7.3 0.8V3.7H10.2Z" fill="#e8c070"/><path fill="none" d="M6.3 3.5V9.2Q6.3 11.3 4.3 11.3Q3.2 11.3 2.6 10.6" stroke="#2a6098" stroke-width="1.9"/></svg>
<div class="t" style="left:820px;top:83px;font-size:13px;line-height:16px;color:#000;font-family:'Liberation Sans',sans-serif;">MysqlJdbc.java</div>
<svg class="a" style="left:940px;top:83px" width="11" height="14" viewBox="0 0 11 14"><path d="M0.6 0.6H7.5L10.4 3.5V13.4H0.6Z" fill="#f2f6fc" stroke="#a8843a" stroke-width="1.2"/><path d="M7.3 0.8V3.7H10.2Z" fill="#e8c070"/><path fill="none" d="M6.3 3.5V9.2Q6.3 11.3 4.3 11.3Q3.2 11.3 2.6 10.6" stroke="#2a6098" stroke-width="1.9"/></svg>
<div class="t" style="left:957px;top:83px;font-size:13px;line-height:16px;color:#000;font-family:'Liberation Sans',sans-serif;">LoginDialog.java</div>
<svg class="a" style="left:1085px;top:83px" width="11" height="14" viewBox="0 0 11 14"><path d="M0.6 0.6H7.5L10.4 3.5V13.4H0.6Z" fill="#f2f6fc" stroke="#a8843a" stroke-width="1.2"/><path d="M7.3 0.8V3.7H10.2Z" fill="#e8c070"/><path fill="none" d="M6.3 3.5V9.2Q6.3 11.3 4.3 11.3Q3.2 11.3 2.6 10.6" stroke="#2a6098" stroke-width="1.9"/></svg>
<div class="t" style="left:1102px;top:83px;font-size:13px;line-height:16px;color:#000;font-family:'Liberation Sans',sans-serif;">Main.java</div>
<svg class="a" style="left:1189px;top:83px" width="11" height="14" viewBox="0 0 11 14"><path d="M0.6 0.6H7.5L10.4 3.5V13.4H0.6Z" fill="#f2f6fc" stroke="#a8843a" stroke-width="1.2"/><path d="M7.3 0.8V3.7H10.2Z" fill="#e8c070"/><path fill="none" d="M6.3 3.5V9.2Q6.3 11.3 4.3 11.3Q3.2 11.3 2.6 10.6" stroke="#2a6098" stroke-width="1.9"/></svg>
<div class="t" style="left:1206px;top:83px;font-size:13px;line-height:16px;color:#000;font-family:'Liberation Sans',sans-serif;">Test1.java</div>
<svg class="a" style="left:1293px;top:83px" width="11" height="14" viewBox="0 0 11 14"><path d="M0.6 0.6H7.5L10.4 3.5V13.4H0.6Z" fill="#f2f6fc" stroke="#a8843a" stroke-width="1.2"/><path d="M7.3 0.8V3.7H10.2Z" fill="#e8c070"/><path fill="none" d="M6.3 3.5V9.2Q6.3 11.3 4.3 11.3Q3.2 11.3 2.6 10.6" stroke="#2a6098" stroke-width="1.9"/><path d="M0 13.5L2.5 9L5 13.5Z" fill="#f8d040" stroke="#b08020" stroke-width="0.6"/></svg>
<div class="t" style="left:1312px;top:83px;font-size:13px;line-height:16px;color:#000;font-family:'Liberation Sans',sans-serif;">Triangle.java</div>
<svg class="a" style="left:1417px;top:83px" width="11" height="14" viewBox="0 0 11 14"><path d="M0.6 0.6H7.5L10.4 3.5V13.4H0.6Z" fill="#f2f6fc" stroke="#a8843a" stroke-width="1.2"/><path d="M7.3 0.8V3.7H10.2Z" fill="#e8c070"/><path fill="none" d="M6.3 3.5V9.2Q6.3 11.3 4.3 11.3Q3.2 11.3 2.6 10.6" stroke="#2a6098" stroke-width="1.9"/></svg>
<div class="t" style="left:1434px;top:83px;font-size:13px;line-height:16px;color:#000;font-family:'Liberation Sans',sans-serif;">TriangleTest.java</div>
<svg class="a" style="left:1537px;top:84px" width="11" height="11" viewBox="0 0 11 11"><path fill="none" d="M1.5 1.5L9.5 9.5M9.5 1.5L1.5 9.5" stroke="#707070" stroke-width="2.8" stroke-linecap="square"/><path fill="none" d="M1.5 1.5L9.5 9.5M9.5 1.5L1.5 9.5" stroke="#fff" stroke-width="1.3" stroke-linecap="square"/></svg>
<div class="a" style="left:1693px;top:84px;width:11px;height:5px;border:1px solid #555;background:#fff"></div>
<svg class="a" style="left:1716px;top:84px" width="11" height="11" viewBox="0 0 11 11"><rect x="0.5" y="0.5" width="10" height="10" fill="#fff" stroke="#555"/><rect x="1" y="1" width="9" height="1" fill="#555"/></svg>
<div class="a" style="left:479px;top:103px;width:12px;height:461px;background:#f8f8f8"></div>
<div class="a" style="left:491px;top:546px;width:30px;height:20px;background:#f8f8f8"></div>
<div class="a" style="left:520px;top:103px;width:1px;height:443px;background:#f4f4f4"></div>
<div class="a" style="left:523px;top:236px;width:1185px;height:22px;background:#e8f2fe"></div>
<svg class="a" style="left:479px;top:236px" width="12" height="22" viewBox="0 0 12 22"><defs><pattern id="chk" width="2" height="2" patternUnits="userSpaceOnUse"><rect width="2" height="2" fill="#fff"/><rect width="1" height="1" fill="#1a6fd8"/><rect x="1" y="1" width="1" height="1" fill="#1a6fd8"/></pattern></defs><rect width="12" height="22" fill="url(#chk)"/><rect x="0.5" y="0.5" width="11" height="21" fill="none" stroke="#1a6fd8" stroke-width="1"/></svg>
<div class="ln" style="left:490px;top:106px;width:21px">1
2
3
6
7
8
9
10
11
12
13
14
15
16
17
18
19
20
21
22</div>
<div class="code" style="left:523px;top:106px"><span class="kw">package</span> com.scs.junit;

<span class="kw">import</span> <span class="kw">static</span> org.junit.Assert.*;

<span class="kw">public</span> <span class="kw">class</span> TriangleTest {

    <span class="kw">public</span> Triangle <span class="fld">tri</span>;

    <span class="ann">@Test</span>

    <span class="kw">public</span> <span class="kw">void</span> testEquilateral() {

    <span class="fld">tri</span> = <span class="kw">new</span> Triangle();

    <span class="it">assertEquals</span>(<span class="str">"Equilateral"</span>,<span class="fld">tri</span>.Equilateral(2, 2, 2));
    <span class="it">assertEquals</span>(<span class="str">"Equilateral"</span>,<span class="fld">tri</span>.Equilateral(3, 3, 3));
    <span class="it">assertEquals</span>(<span class="str">"Equilateral"</span>,<span class="fld">tri</span>.Equilateral(4, 4, 4));

    }
</div>
<svg class="a" style="left:510px;top:154px" width="10" height="10" viewBox="0 0 10 10"><circle cx="5" cy="5" r="4.3" fill="#d8e4f0" stroke="#9ab0c4" stroke-width="0.9"/><path fill="none" d="M2.5 5H7.5M5 2.5V7.5" stroke="#223" stroke-width="1.1"/></svg>
<svg class="a" style="left:510px;top:286px" width="10" height="10" viewBox="0 0 10 10"><circle cx="5" cy="5" r="4.3" fill="#d8e4f0" stroke="#9ab0c4" stroke-width="0.9"/><path fill="none" d="M2.5 5H7.5" stroke="#667" stroke-width="1.1"/></svg>
<svg class="a" style="left:852px;top:150px" width="13" height="19" viewBox="0 0 13 19"><rect x="1.6" y="1.6" width="9.8" height="15.6" fill="#fff" stroke="#808080" stroke-width="1.2"/><rect x="3.5" y="13.5" width="1.2" height="1.2" fill="#888"/><rect x="7.5" y="13.5" width="1.2" height="1.2" fill="#888"/></svg>
<div class="a" style="left:713px;top:238px;width:1px;height:19px;background:#000"></div>
<div class="a" style="left:1709px;top:104px;width:16px;height:444px;background:#f0f0f0"></div>
<div class="a" style="left:1709px;top:121px;width:16px;height:183px;background:#cdcdcd"></div>
<svg class="a" style="left:1712px;top:110px" width="9" height="7" viewBox="0 0 9 7"><path fill="none" d="M1 5.5L4.5 2L8 5.5" stroke="#505050" stroke-width="2.1"/></svg>
<svg class="a" style="left:1712px;top:535px" width="9" height="7" viewBox="0 0 9 7"><path fill="none" d="M1 1.5L4.5 5L8 1.5" stroke="#505050" stroke-width="2.1"/></svg>
<div class="a" style="left:1725px;top:102px;width:15px;height:462px;background:#f8f8f8"></div>
<div class="a" style="left:1709px;top:548px;width:16px;height:16px;background:#f0f0f0"></div>
<div class="a" style="left:521px;top:548px;width:1188px;height:16px;background:#f0f0f0"></div>
<svg class="a" style="left:525px;top:552px" width="7" height="9" viewBox="0 0 7 9"><path fill="none" d="M5.5 1L2 4.5L5.5 8" stroke="#b0b0b0" stroke-width="2"/></svg>
<svg class="a" style="left:1697px;top:552px" width="7" height="9" viewBox="0 0 7 9"><path fill="none" d="M1.5 1L5 4.5L1.5 8" stroke="#b0b0b0" stroke-width="2"/></svg>
<div class="a" style="left:476px;top:571px;width:1265px;height:443px;background:#fff;border-radius:7px;overflow:hidden"><div class="a" style="left:0px;top:1px;width:1265px;height:25px;background:#f3f5fb"></div>
<div class="a" style="left:404px;top:0px;width:106px;height:26px;background:linear-gradient(#dfe6ef,#f3f5fb 60%,#fcfdfe);border-radius:6px 6px 0 0"></div>
</div>
<svg class="a" style="left:480px;top:576px" width="14" height="16" viewBox="0 0 14 16"><rect x="0.5" y="0.5" width="13" height="15" fill="none" stroke="#d8c8a8" stroke-width="0.6"/><circle cx="5" cy="4.5" r="3" fill="#e87888"/><rect x="0.5" y="8.5" width="6" height="7" fill="#e890a0"/><path fill="none" d="M2 10.5L5 13.5M5 10.5L2 13.5" stroke="#fff"/><path d="M8 2H11Q13 2 13 4V14H9" stroke="#b8c8e0" fill="none"/></svg>
<div class="t" style="left:500px;top:578px;font-size:13px;line-height:16px;color:#737780;font-family:'Liberation Sans',sans-serif;">Problems</div>
<div class="t" style="left:566px;top:578px;font-size:13px;line-height:16px;color:#8a9ab0;font-family:'Liberation Sans',sans-serif;">@</div>
<div class="t" style="left:585px;top:578px;font-size:13px;line-height:16px;color:#737780;font-family:'Liberation Sans',sans-serif;">Javadoc</div>
<svg class="a" style="left:643px;top:576px" width="14" height="16" viewBox="0 0 14 16"><path d="M0.5 0.5H8L12.5 5V15.5H0.5Z" fill="#fbf7ee" stroke="#c8b890"/><path fill="none" d="M3 5H8M3 8H7" stroke="#b0a080"/><path d="M5 10L8 13L11 10" stroke="#8aa0c0" fill="none"/></svg>
<div class="t" style="left:662px;top:578px;font-size:13px;line-height:16px;color:#737780;font-family:'Liberation Sans',sans-serif;">Declaration</div>
<svg class="a" style="left:740px;top:577px" width="14" height="14" viewBox="0 0 14 14"><rect x="0.5" y="0.5" width="13" height="10" fill="#e8eef8" stroke="#6a7a90"/><rect x="2" y="2" width="10" height="7" fill="#fff"/><path fill="none" d="M3 4H9M3 6H7" stroke="#6a7a90"/><path fill="none" d="M3 13H11" stroke="#6a7a90" stroke-width="1.5"/></svg>
<div class="t" style="left:758px;top:578px;font-size:13px;line-height:16px;color:#5f636a;font-family:'Liberation Sans',sans-serif;font-weight:bold">Console</div>
<svg class="a" style="left:817px;top:577px" width="14" height="14" viewBox="0 0 14 14"><ellipse cx="7" cy="7.5" rx="3.5" ry="4.5" fill="#d8e8d8" stroke="#9ab0a0"/><path fill="none" d="M3 3L1 1M11 3L13 1M3 7H0M11 7H14M3 11L1 13M11 11L13 13" stroke="#9ab0a0"/></svg>
<div class="t" style="left:835px;top:578px;font-size:13px;line-height:16px;color:#737780;font-family:'Liberation Sans',sans-serif;">Debug</div>
<svg class="a" style="left:885px;top:577px" width="15" height="14" viewBox="0 0 15 14"><rect x="0.5" y="0.5" width="10" height="12" fill="#fff" stroke="#8a8070"/><path fill="none" d="M2 3H8M2 5H6" stroke="#aaa"/><rect x="3" y="7" width="12" height="7" fill="#000"/><rect x="4" y="8" width="5" height="5" fill="#10b010"/><rect x="9" y="8" width="5" height="5" fill="#e01010"/></svg>
<div class="t" style="left:903px;top:578px;font-size:13px;line-height:16px;color:#000;font-family:'Liberation Sans',sans-serif;">Coverage</div>
<svg class="a" style="left:965px;top:579px" width="11" height="11" viewBox="0 0 11 11"><path fill="none" d="M1.5 1.5L9.5 9.5M9.5 1.5L1.5 9.5" stroke="#707070" stroke-width="2.8" stroke-linecap="square"/><path fill="none" d="M1.5 1.5L9.5 9.5M9.5 1.5L1.5 9.5" stroke="#fff" stroke-width="1.3" stroke-linecap="square"/></svg>
<svg class="a" style="left:990px;top:577px" width="14" height="14" viewBox="0 0 14 14"><rect x="0.5" y="0.5" width="4" height="4" fill="#fff" stroke="#6a8ab0"/><rect x="3.5" y="6.5" width="3" height="3" fill="#fff" stroke="#6a8ab0"/><rect x="3.5" y="10.5" width="3" height="3" fill="#fff" stroke="#6a8ab0"/><path fill="none" d="M2 5V12H3.5M2 8H3.5M8 2H13M8 8H13M8 12H13" stroke="#8aa0c0"/></svg>
<div class="t" style="left:1009px;top:578px;font-size:13px;line-height:16px;color:#737780;font-family:'Liberation Sans',sans-serif;">Outline</div>
<svg class="a" style="left:1431px;top:578px" width="16" height="15" viewBox="0 0 16 15"><rect x="0" y="2" width="10" height="5" fill="#000"/><rect x="1" y="3" width="4" height="3" fill="#10b010"/><rect x="5" y="3" width="4" height="3" fill="#e01010"/><path d="M7 9H10V6.5L14 10L10 13.5V11H7Z" fill="#f0c040" stroke="#c08020" stroke-width="0.8"/></svg>
<svg class="a" style="left:1455px;top:577px" width="15" height="16" viewBox="0 0 15 16"><rect x="0.5" y="0.5" width="7" height="14" fill="#eee" stroke="#bbb"/><rect x="5" y="10" width="9" height="5" fill="#999"/><path d="M10 2V8M8 6L10 8L12 6" stroke="#999" fill="none"/></svg>
<svg class="a" style="left:1478px;top:583px" width="8" height="5" viewBox="0 0 8 5"><path d="M0 0H8L4 4Z" fill="#444"/></svg>
<div class="a" style="left:1492px;top:576px;width:1px;height:17px;background:#888"></div>
<svg class="a" style="left:1503px;top:578px" width="14" height="14" viewBox="0 0 14 14"><path fill="none" d="M2 2L12 12M12 2L2 12" stroke="#555" stroke-width="3"/></svg>
<svg class="a" style="left:1525px;top:577px" width="16" height="16" viewBox="0 0 16 16"><path fill="none" d="M2 2L12 12M12 2L2 12" stroke="#888" stroke-width="2.5"/><path fill="none" d="M5 5L15 15M15 5L5 15" stroke="#666" stroke-width="2.5"/></svg>
<svg class="a" style="left:1548px;top:578px" width="15" height="14" viewBox="0 0 15 14"><rect x="0.5" y="0.5" width="11" height="5" fill="#e01010" stroke="#000"/><rect x="0.5" y="7.5" width="11" height="5" fill="#10b010" stroke="#000"/><path d="M12 3H14V11H12" stroke="#000" fill="none"/></svg>
<svg class="a" style="left:1571px;top:577px" width="16" height="16" viewBox="0 0 16 16"><circle cx="5" cy="9" r="3.5" fill="#e8b040" stroke="#805010"/><circle cx="10" cy="5" r="3" fill="#e8b040" stroke="#805010"/><rect x="8" y="10" width="8" height="5" fill="#000"/><rect x="9" y="11" width="3" height="3" fill="#10b010"/><rect x="12" y="11" width="3" height="3" fill="#e01010"/></svg>
<svg class="a" style="left:1595px;top:583px" width="8" height="5" viewBox="0 0 8 5"><path d="M0 0H8L4 4Z" fill="#444"/></svg>
<div class="a" style="left:1610px;top:576px;width:1px;height:17px;background:#888"></div>
<svg class="a" style="left:1619px;top:578px" width="15" height="15" viewBox="0 0 15 15"><rect x="0.5" y="0.5" width="10" height="12" fill="#fff" stroke="#bbb"/><rect x="3.5" y="3.5" width="10" height="10" fill="#fff" stroke="#bbb"/><path fill="none" d="M5.5 8.5H11.5" stroke="#bbb" stroke-width="1.5"/></svg>
<svg class="a" style="left:1642px;top:577px" width="16" height="16" viewBox="0 0 16 16"><path d="M5 3H13L11 1M13 3L11 5M11 11H3L5 9M3 11L5 13" stroke="#bbb" stroke-width="1.4" fill="none"/></svg>
<svg class="a" style="left:1672px;top:579px" width="11" height="6" viewBox="0 0 11 6"><path d="M0.5 0.5H10.5L5.5 5.5Z" fill="#fff" stroke="#444"/></svg>
<div class="a" style="left:1693px;top:579px;width:11px;height:5px;border:1px solid #555;background:#fff"></div>
<svg class="a" style="left:1716px;top:579px" width="11" height="11" viewBox="0 0 11 11"><rect x="0.5" y="0.5" width="10" height="10" fill="#fff" stroke="#555"/><rect x="1" y="1" width="9" height="1" fill="#555"/></svg>
<div class="t" style="left:479px;top:600px;font-size:13px;line-height:16px;color:#000;font-family:'Liberation Sans',sans-serif;">TriangleTest (2018-3-21 21:48:20)</div>
<div class="a" style="left:479px;top:616px;width:1259px;height:1px;background:#a0a0a0"></div>
<div class="a" style="left:979px;top:641px;width:119px;height:369px;background:#f6f6f6"></div>
<div class="a" style="left:478px;top:661px;width:1260px;height:1px;background:#e5e5e5"></div>
<div class="a" style="left:478px;top:681px;width:1260px;height:1px;background:#e5e5e5"></div>
<div class="a" style="left:478px;top:701px;width:1260px;height:1px;background:#e5e5e5"></div>
<div class="a" style="left:478px;top:721px;width:1260px;height:1px;background:#e5e5e5"></div>
<div class="a" style="left:478px;top:741px;width:1260px;height:1px;background:#e5e5e5"></div>
<div class="a" style="left:478px;top:761px;width:1260px;height:1px;background:#e5e5e5"></div>
<div class="a" style="left:478px;top:781px;width:1260px;height:1px;background:#e5e5e5"></div>
<div class="a" style="left:478px;top:801px;width:1260px;height:1px;background:#e5e5e5"></div>
<div class="a" style="left:478px;top:821px;width:1260px;height:1px;background:#e5e5e5"></div>
<div class="a" style="left:478px;top:841px;width:1260px;height:1px;background:#e5e5e5"></div>
<div class="a" style="left:478px;top:861px;width:1260px;height:1px;background:#e5e5e5"></div>
<div class="a" style="left:478px;top:881px;width:1260px;height:1px;background:#e5e5e5"></div>
<div class="a" style="left:478px;top:901px;width:1260px;height:1px;background:#e5e5e5"></div>
<div class="a" style="left:478px;top:921px;width:1260px;height:1px;background:#e5e5e5"></div>
<div class="a" style="left:478px;top:941px;width:1260px;height:1px;background:#e5e5e5"></div>
<div class="a" style="left:478px;top:961px;width:1260px;height:1px;background:#e5e5e5"></div>
<div class="a" style="left:478px;top:981px;width:1260px;height:1px;background:#e5e5e5"></div>
<div class="a" style="left:478px;top:1001px;width:1260px;height:1px;background:#e5e5e5"></div>
<div class="a" style="left:778px;top:618px;width:1px;height:392px;background:#e5e5e5"></div>
<div class="a" style="left:858px;top:618px;width:1px;height:392px;background:#e5e5e5"></div>
<div class="a" style="left:978px;top:618px;width:1px;height:392px;background:#e5e5e5"></div>
<div class="a" style="left:1098px;top:618px;width:1px;height:392px;background:#e5e5e5"></div>
<div class="a" style="left:1218px;top:618px;width:1px;height:392px;background:#e5e5e5"></div>
<div class="t" style="left:485px;top:622px;font-size:13px;line-height:16px;color:#000;font-family:'Liberation Sans',sans-serif;">Element</div>
<div class="t" style="left:797px;top:622px;font-size:13px;line-height:16px;color:#000;font-family:'Liberation Sans',sans-serif;">Coverage</div>
<div class="t" style="left:865px;top:622px;font-size:13px;line-height:16px;color:#000;font-family:'Liberation Sans',sans-serif;">Covered Instructi...</div>
<div class="t" style="left:992px;top:622px;font-size:13px;line-height:16px;color:#000;font-family:'Liberation Sans',sans-serif;">Missed Instructi...</div>
<div class="t" style="left:1113px;top:622px;font-size:13px;line-height:16px;color:#000;font-family:'Liberation Sans',sans-serif;">Total Instructions</div>
<svg class="a" style="left:1034px;top:618px" width="9" height="5" viewBox="0 0 9 5"><path d="M0.5 0.5L4.5 4.5L8.5 0.5" stroke="#999" fill="none"/></svg>
<svg class="a" style="left:485px;top:648px" width="10" height="7" viewBox="0 0 10 7"><path d="M1 1L5 5L9 1" stroke="#444" stroke-width="1.8" fill="none"/></svg>
<svg class="a" style="left:504px;top:642px" width="17" height="16" viewBox="0 0 17 16"><path d="M0.5 4.5H5L6 3H12.5V13.5H0.5Z" fill="#f8e0a0" stroke="#b89040"/><path d="M0.5 13.5L3 8.5H16L12.5 13.5Z" fill="#a8c8f0" stroke="#4a78c0"/><path d="M14.5 0.5V4.5Q14.5 6.5 12.5 6.5Q11 6.5 11 5.5" stroke="#2a5aa0" stroke-width="1.2" fill="none"/></svg>
<div class="t" style="left:524px;top:644px;font-size:13px;line-height:16px;color:#000;font-family:'Liberation Sans',sans-serif;">JunitTestLab1</div>
<svg class="a" style="left:781px;top:645px" width="21" height="12" viewBox="0 0 21 12"><defs><linearGradient id="g781645" x1="0" y1="0" x2="0" y2="1"><stop offset="0" stop-color="#00a000"/><stop offset="0.5" stop-color="#a8e4a8"/><stop offset="1" stop-color="#00a800"/></linearGradient></defs><rect x="0" y="0" width="21" height="12" fill="url(#g781645)"/></svg>
<div class="t" style="left:778px;top:644px;width:78px;text-align:right">96.4 %</div>
<div class="t" style="left:858px;top:644px;width:118px;text-align:right">134</div>
<div class="t" style="left:978px;top:644px;width:118px;text-align:right">5</div>
<div class="t" style="left:1098px;top:644px;width:117px;text-align:right">139</div>
<svg class="a" style="left:504px;top:668px" width="10" height="7" viewBox="0 0 10 7"><path d="M1 1L5 5L9 1" stroke="#444" stroke-width="1.8" fill="none"/></svg>
<svg class="a" style="left:523px;top:663px" width="16" height="14" viewBox="0 0 16 14"><path d="M0.5 4.5H4L5 3H12.5V12.5H0.5Z" fill="#f4d890" stroke="#b89040"/><path d="M0.5 12.5L3 7.5H15.5L12.5 12.5Z" fill="#f8e4b0" stroke="#b89040"/><path fill="none" d="M6 1V7M10 1V7M5 2.5H11M5 5H11" stroke="#8a5030"/></svg>
<div class="t" style="left:543px;top:664px;font-size:13px;line-height:16px;color:#000;font-family:'Liberation Sans',sans-serif;">src</div>
<svg class="a" style="left:781px;top:665px" width="21" height="12" viewBox="0 0 21 12"><defs><linearGradient id="g781665" x1="0" y1="0" x2="0" y2="1"><stop offset="0" stop-color="#00a000"/><stop offset="0.5" stop-color="#a8e4a8"/><stop offset="1" stop-color="#00a800"/></linearGradient></defs><rect x="0" y="0" width="21" height="12" fill="url(#g781665)"/></svg>
<div class="t" style="left:778px;top:664px;width:78px;text-align:right">96.4 %</div>
<div class="t" style="left:858px;top:664px;width:118px;text-align:right">134</div>
<div class="t" style="left:978px;top:664px;width:118px;text-align:right">5</div>
<div class="t" style="left:1098px;top:664px;width:117px;text-align:right">139</div>
<svg class="a" style="left:523px;top:688px" width="10" height="7" viewBox="0 0 10 7"><path d="M1 1L5 5L9 1" stroke="#444" stroke-width="1.8" fill="none"/></svg>
<svg class="a" style="left:544px;top:684px" width="15" height="15" viewBox="0 0 15 15"><defs><radialGradient id="pk" cx="0.5" cy="0.5" r="0.6"><stop offset="0" stop-color="#f8e8b0"/><stop offset="1" stop-color="#d8b078"/></radialGradient></defs><rect x="1" y="1" width="12" height="12" fill="url(#pk)" stroke="#8a5a3a" stroke-width="1"/><path fill="none" d="M0 7H14M7 0V14" stroke="#6a3a20" stroke-width="1.3"/></svg>
<div class="t" style="left:562px;top:684px;font-size:13px;line-height:16px;color:#000;font-family:'Liberation Sans',sans-serif;">com.scs.junit</div>
<svg class="a" style="left:781px;top:685px" width="21" height="12" viewBox="0 0 21 12"><defs><linearGradient id="g781685" x1="0" y1="0" x2="0" y2="1"><stop offset="0" stop-color="#00a000"/><stop offset="0.5" stop-color="#a8e4a8"/><stop offset="1" stop-color="#00a800"/></linearGradient></defs><rect x="0" y="0" width="21" height="12" fill="url(#g781685)"/></svg>
<div class="t" style="left:778px;top:684px;width:78px;text-align:right">96.4 %</div>
<div class="t" style="left:858px;top:684px;width:118px;text-align:right">134</div>
<div class="t" style="left:978px;top:684px;width:118px;text-align:right">5</div>
<div class="t" style="left:1098px;top:684px;width:117px;text-align:right">139</div>
<svg class="a" style="left:542px;top:708px" width="10" height="7" viewBox="0 0 10 7"><path d="M1 1L5 5L9 1" stroke="#444" stroke-width="1.8" fill="none"/></svg>
<svg class="a" style="left:561px;top:703px" width="11" height="14" viewBox="0 0 11 14"><path d="M0.6 0.6H7.5L10.4 3.5V13.4H0.6Z" fill="#f2f6fc" stroke="#a8843a" stroke-width="1.2"/><path d="M7.3 0.8V3.7H10.2Z" fill="#e8c070"/><path fill="none" d="M6.3 3.5V9.2Q6.3 11.3 4.3 11.3Q3.2 11.3 2.6 10.6" stroke="#2a6098" stroke-width="1.9"/></svg>
<div class="t" style="left:581px;top:704px;font-size:13px;line-height:16px;color:#000;font-family:'Liberation Sans',sans-serif;">Triangle.java</div>
<svg class="a" style="left:781px;top:705px" width="21" height="12" viewBox="0 0 21 12"><defs><linearGradient id="g781705" x1="0" y1="0" x2="0" y2="1"><stop offset="0" stop-color="#00a000"/><stop offset="0.5" stop-color="#a8e4a8"/><stop offset="1" stop-color="#00a800"/></linearGradient></defs><rect x="0" y="0" width="21" height="12" fill="url(#g781705)"/><rect x="0" y="0" width="1" height="12" fill="#e02020"/><rect x="0" y="5" width="1" height="2" fill="#f0a0a0"/></svg>
<div class="t" style="left:778px;top:704px;width:78px;text-align:right">93.6 %</div>
<div class="t" style="left:858px;top:704px;width:118px;text-align:right">73</div>
<div class="t" style="left:978px;top:704px;width:118px;text-align:right">5</div>
<div class="t" style="left:1098px;top:704px;width:117px;text-align:right">78</div>
<svg class="a" style="left:561px;top:728px" width="10" height="7" viewBox="0 0 10 7"><path d="M1 1L5 5L9 1" stroke="#444" stroke-width="1.8" fill="none"/></svg>
<svg class="a" style="left:580px;top:722px" width="14" height="14" viewBox="0 0 14 14"><circle cx="6.5" cy="6.5" r="6" fill="#3e9a3e"/><path d="M9 4.5Q8 3.5 6.5 3.5Q3.7 3.5 3.7 6.5Q3.7 9.5 6.5 9.5Q8 9.5 9 8.5" stroke="#fff" stroke-width="1.8" fill="none"/></svg>
<div class="t" style="left:600px;top:724px;font-size:13px;line-height:16px;color:#000;font-family:'Liberation Sans',sans-serif;">Triangle</div>
<svg class="a" style="left:781px;top:725px" width="21" height="12" viewBox="0 0 21 12"><defs><linearGradient id="g781725" x1="0" y1="0" x2="0" y2="1"><stop offset="0" stop-color="#00a000"/><stop offset="0.5" stop-color="#a8e4a8"/><stop offset="1" stop-color="#00a800"/></linearGradient></defs><rect x="0" y="0" width="21" height="12" fill="url(#g781725)"/><rect x="0" y="0" width="1" height="12" fill="#e02020"/><rect x="0" y="5" width="1" height="2" fill="#f0a0a0"/></svg>
<div class="t" style="left:778px;top:724px;width:78px;text-align:right">93.6 %</div>
<div class="t" style="left:858px;top:724px;width:118px;text-align:right">73</div>
<div class="t" style="left:978px;top:724px;width:118px;text-align:right">5</div>
<div class="t" style="left:1098px;top:724px;width:117px;text-align:right">78</div>
<div class="a" style="left:594px;top:742px;width:141px;height:19px;background:#d9d9d9"></div>
<svg class="a" style="left:602px;top:747px" width="10" height="10" viewBox="0 0 10 10"><circle cx="5" cy="5" r="4.2" fill="#4c9a5a" stroke="#2a6a3a" stroke-width="0.8"/><circle cx="4.2" cy="4" r="1.6" fill="#8ac89a"/></svg>
<div class="t" style="left:619px;top:744px;font-size:13px;line-height:16px;color:#000;font-family:'Liberation Sans',sans-serif;">Isosceles(int, int, int)</div>
<svg class="a" style="left:781px;top:745px" width="16" height="12" viewBox="0 0 16 12"><defs><linearGradient id="g781745" x1="0" y1="0" x2="0" y2="1"><stop offset="0" stop-color="#00a000"/><stop offset="0.5" stop-color="#a8e4a8"/><stop offset="1" stop-color="#00a800"/></linearGradient></defs><rect x="0" y="0" width="16" height="12" fill="url(#g781745)"/><rect x="0" y="0" width="3" height="12" fill="#e02020"/><rect x="0" y="5" width="3" height="2" fill="#f0a0a0"/></svg>
<div class="t" style="left:778px;top:744px;width:78px;text-align:right">81.5 %</div>
<div class="t" style="left:858px;top:744px;width:118px;text-align:right">22</div>
<div class="t" style="left:978px;top:744px;width:118px;text-align:right">5</div>
<div class="t" style="left:1098px;top:744px;width:117px;text-align:right">27</div>
<svg class="a" style="left:602px;top:767px" width="10" height="10" viewBox="0 0 10 10"><circle cx="5" cy="5" r="4.2" fill="#4c9a5a" stroke="#2a6a3a" stroke-width="0.8"/><circle cx="4.2" cy="4" r="1.6" fill="#8ac89a"/></svg>
<div class="t" style="left:619px;top:764px;font-size:13px;line-height:16px;color:#000;font-family:'Liberation Sans',sans-serif;">Equilateral(int, int, int)</div>
<svg class="a" style="left:781px;top:765px" width="7" height="12" viewBox="0 0 7 12"><defs><linearGradient id="g781765" x1="0" y1="0" x2="0" y2="1"><stop offset="0" stop-color="#00a000"/><stop offset="0.5" stop-color="#a8e4a8"/><stop offset="1" stop-color="#00a800"/></linearGradient></defs><rect x="0" y="0" width="7" height="12" fill="url(#g781765)"/></svg>
<div class="t" style="left:778px;top:764px;width:78px;text-align:right">100.0 %</div>
<div class="t" style="left:858px;top:764px;width:118px;text-align:right">12</div>
<div class="t" style="left:978px;top:764px;width:118px;text-align:right">0</div>
<div class="t" style="left:1098px;top:764px;width:117px;text-align:right">12</div>
<svg class="a" style="left:602px;top:787px" width="10" height="10" viewBox="0 0 10 10"><circle cx="5" cy="5" r="4.2" fill="#4c9a5a" stroke="#2a6a3a" stroke-width="0.8"/><circle cx="4.2" cy="4" r="1.6" fill="#8ac89a"/></svg>
<div class="t" style="left:619px;top:784px;font-size:13px;line-height:16px;color:#000;font-family:'Liberation Sans',sans-serif;">Ordinary(int, int, int)</div>
<svg class="a" style="left:781px;top:785px" width="22" height="12" viewBox="0 0 22 12"><defs><linearGradient id="g781785" x1="0" y1="0" x2="0" y2="1"><stop offset="0" stop-color="#00a000"/><stop offset="0.5" stop-color="#a8e4a8"/><stop offset="1" stop-color="#00a800"/></linearGradient></defs><rect x="0" y="0" width="22" height="12" fill="url(#g781785)"/></svg>
<div class="t" style="left:778px;top:784px;width:78px;text-align:right">100.0 %</div>
<div class="t" style="left:858px;top:784px;width:118px;text-align:right">36</div>
<div class="t" style="left:978px;top:784px;width:118px;text-align:right">0</div>
<div class="t" style="left:1098px;top:784px;width:117px;text-align:right">36</div>
<svg class="a" style="left:544px;top:806px" width="7" height="10" viewBox="0 0 7 10"><path d="M1 1L5 5L1 9" stroke="#999" stroke-width="1.8" fill="none"/></svg>
<svg class="a" style="left:561px;top:803px" width="11" height="14" viewBox="0 0 11 14"><path d="M0.6 0.6H7.5L10.4 3.5V13.4H0.6Z" fill="#f2f6fc" stroke="#a8843a" stroke-width="1.2"/><path d="M7.3 0.8V3.7H10.2Z" fill="#e8c070"/><path fill="none" d="M6.3 3.5V9.2Q6.3 11.3 4.3 11.3Q3.2 11.3 2.6 10.6" stroke="#2a6098" stroke-width="1.9"/></svg>
<div class="t" style="left:581px;top:804px;font-size:13px;line-height:16px;color:#000;font-family:'Liberation Sans',sans-serif;">TriangleTest.java</div>
<svg class="a" style="left:781px;top:805px" width="17" height="12" viewBox="0 0 17 12"><defs><linearGradient id="g781805" x1="0" y1="0" x2="0" y2="1"><stop offset="0" stop-color="#00a000"/><stop offset="0.5" stop-color="#a8e4a8"/><stop offset="1" stop-color="#00a800"/></linearGradient></defs><rect x="0" y="0" width="17" height="12" fill="url(#g781805)"/></svg>
<div class="t" style="left:778px;top:804px;width:78px;text-align:right">100.0 %</div>
<div class="t" style="left:858px;top:804px;width:118px;text-align:right">61</div>
<div class="t" style="left:978px;top:804px;width:118px;text-align:right">0</div>
<div class="t" style="left:1098px;top:804px;width:117px;text-align:right">61</div>
<div class="a" style="left:1745px;top:76px;width:141px;height:938px;background:#fff;border-radius:7px;overflow:hidden"><div class="a" style="left:0px;top:0px;width:140px;height:26px;background:linear-gradient(#dfe6ef,#f3f5fb 60%,#fcfdfe)"></div>
<div class="a" style="left:8px;top:28px;width:125px;height:76px;background:#f3f5fa"></div>
</div>
<svg class="a" style="left:1752px;top:83px" width="12" height="15" viewBox="0 0 12 15"><path d="M0.5 0.5H10.5V14L8 12.5L5.5 14L3 12.5L0.5 14Z" fill="#fff" stroke="#555"/><path fill="none" d="M2.5 3.5H8.5M2.5 6H8.5M2.5 8.5H8.5" stroke="#555" stroke-width="0.9"/><path d="M0.5 11.5V14.5Q3 12.5 5.5 14.5Q8 12.5 10.5 14.5V11.5Z" fill="#9a90d0"/></svg>
<div class="t" style="left:1769px;top:83px;font-size:13px;line-height:16px;color:#000;font-family:'Liberation Sans',sans-serif;">Tas...</div>
<svg class="a" style="left:1828px;top:84px" width="4" height="10" viewBox="0 0 4 10"><path d="M0 1L3 5L0 9" stroke="#444" fill="none" stroke-width="1.2"/></svg>
<div class="a" style="left:1832px;top:78px;width:23px;height:21px;background:#dae6f4;border:1px solid #cfe0f2"></div>
<div class="a" style="left:1838px;top:84px;width:11px;height:5px;border:1px solid #555;background:#fff"></div>
<svg class="a" style="left:1861px;top:84px" width="11" height="11" viewBox="0 0 11 11"><rect x="0.5" y="0.5" width="10" height="10" fill="#fff" stroke="#555"/><rect x="1" y="1" width="9" height="1.5" fill="#555"/></svg>
<svg class="a" style="left:1760px;top:107px" width="16" height="16" viewBox="0 0 16 16"><path d="M1.5 5.5L4 3.5H10.5V15.5H1.5Z" fill="#eef2f8" stroke="#7a8aa8"/><path d="M12 0L13.2 2.3L15.5 3L13.2 3.7L12 6L10.8 3.7L8.5 3L10.8 2.3Z" fill="#f5d060" stroke="#c09020" stroke-width="0.6"/></svg>
<svg class="a" style="left:1781px;top:113px" width="8" height="5" viewBox="0 0 8 5"><path d="M0 0H8L4 4Z" fill="#111"/></svg>
<div class="a" style="left:1795px;top:106px;width:1px;height:17px;background:#777"></div>
<div class="a" style="left:1801px;top:104px;width:23px;height:21px;background:#cce4f7;border:1px solid #99c9ef"></div>
<svg class="a" style="left:1805px;top:107px" width="16" height="16" viewBox="0 0 16 16"><rect x="1" y="1" width="8" height="4" fill="#c8d8e8" stroke="#7a8aa0" stroke-width="0.8"/><path fill="none" d="M4 5V14M4 9H7M4 13H7M9 6H15M10 9H15M10 13H15" stroke="#6a80a0"/><rect x="7" y="8" width="2" height="2" fill="#6a80a0"/><rect x="7" y="12" width="2" height="2" fill="#6a80a0"/></svg>
<svg class="a" style="left:1828px;top:107px" width="16" height="16" viewBox="0 0 16 16"><circle cx="4" cy="4" r="3.2" fill="#fff" stroke="#6a80a0"/><path fill="none" d="M4 2V4H5.5" stroke="#6a80a0"/><path fill="none" d="M4 7V14M4 9H7M4 13H7M8 6H14M9 9H14M9 13H14" stroke="#6a80a0"/></svg>
<div class="a" style="left:1849px;top:106px;width:1px;height:17px;background:#777"></div>
<svg class="a" style="left:1860px;top:108px" width="13" height="13" viewBox="0 0 13 13"><circle cx="3.5" cy="3.5" r="3" fill="#bbb"/><circle cx="9.5" cy="5" r="3" fill="#bbb"/><circle cx="5" cy="9.5" r="3" fill="#6a5aa8"/></svg>
<div class="a" style="left:1755px;top:129px;width:121px;height:1px;background:#999"></div>
<div class="a" style="left:1755px;top:130px;width:121px;height:1px;background:#fff"></div>
<svg class="a" style="left:1757px;top:139px" width="15" height="15" viewBox="0 0 15 15"><path fill="none" d="M2.5 8.5L5 11.5L10.5 4.5" stroke="#3a6a98" stroke-width="2"/><path fill="none" d="M0.5 0.5L14.5 14.5" stroke="#102a80" stroke-width="1.2"/></svg>
<svg class="a" style="left:1779px;top:138px" width="16" height="15" viewBox="0 0 16 15"><circle cx="3.5" cy="2.3" r="1.8" fill="#e0a020"/><path d="M1 5H6V10H5V14.5H2V10H1Z" fill="#e8a020"/><circle cx="11.5" cy="2.3" r="1.8" fill="#8a98a8"/><path d="M9 5H14V10H13V14.5H10V10H9Z" fill="#8a98a8"/><path fill="none" d="M6 0.5L15.5 10.5" stroke="#102a80" stroke-width="1.1"/></svg>
<svg class="a" style="left:1804px;top:139px" width="14" height="14" viewBox="0 0 14 14"><rect x="0.5" y="0.5" width="10" height="10" fill="#e0ecf8" stroke="#a8bcd0"/><rect x="2.5" y="3.5" width="10" height="10" fill="#eef6fc" stroke="#7a90b0"/><path fill="none" d="M4.5 8.5H10.5" stroke="#1a4a8a" stroke-width="1.3"/></svg>
<div class="a" style="left:1824px;top:136px;width:1px;height:17px;background:#888"></div>
<svg class="a" style="left:1832px;top:138px" width="16" height="15" viewBox="0 0 16 15"><rect x="6" y="0.5" width="9" height="14" rx="3.5" fill="#5a90d8" stroke="#3a70b8"/><path d="M7 2Q10 0 14 2" stroke="#a8c8f0" fill="none"/><path d="M1 5Q1 2 5 2V0.5L8 3L5 5.5V4Q3 4 3 6Z" fill="#f0c040" stroke="#c08020" stroke-width="0.5"/><path d="M9 10Q9 13 5 13V14.5L2 12L5 9.5V11Q7 11 7 9Z" fill="#f0c040" stroke="#c08020" stroke-width="0.5"/></svg>
<svg class="a" style="left:1762px;top:164px" width="11" height="6" viewBox="0 0 11 6"><path d="M0.5 0.5H10.5L5.5 5.5Z" fill="#fff" stroke="#444"/></svg>
<div class="a" style="left:1751px;top:186px;width:63px;height:21px;background:#fff;border:1px solid #a8a8a8"></div>
<div class="t" style="left:1760px;top:189px;font-size:13px;line-height:16px;color:#555;font-family:'Liberation Sans',sans-serif;">Find</div>
<svg class="a" style="left:1797px;top:190px" width="13" height="13" viewBox="0 0 13 13"><circle cx="5" cy="5" r="3.8" fill="#fff" stroke="#444" stroke-width="1.3"/><path fill="none" d="M8 8L12 12" stroke="#444" stroke-width="1.8"/></svg>
<svg class="a" style="left:1827px;top:191px" width="5" height="9" viewBox="0 0 5 9"><path d="M0 0L4.5 4.5L0 9Z" fill="#222"/></svg>
<div class="t" style="left:1842px;top:189px;font-size:13px;line-height:16px;color:#1a5ad0;font-family:'Liberation Sans',sans-serif;">All</div>
<svg class="a" style="left:1868px;top:191px" width="5" height="9" viewBox="0 0 5 9"><path d="M0 0L4.5 4.5L0 9Z" fill="#222"/></svg>
<div class="a" style="left:1888px;top:76px;width:31px;height:58px;background:#e3e8f5;border:1px solid #c9cfdf;border-radius:6px"></div>
<svg class="a" style="left:1894px;top:82px" width="18" height="3" viewBox="0 0 18 3"><rect x="0" y="0" width="2" height="2" fill="#8a8a8a"/><rect x="4" y="0" width="2" height="2" fill="#8a8a8a"/><rect x="8" y="0" width="2" height="2" fill="#8a8a8a"/><rect x="12" y="0" width="2" height="2" fill="#8a8a8a"/><rect x="16" y="0" width="2" height="2" fill="#8a8a8a"/></svg>
<svg class="a" style="left:1898px;top:93px" width="10" height="9" viewBox="0 0 10 9"><rect x="2.5" y="0.5" width="7" height="5" fill="#fff" stroke="#555"/><rect x="0.5" y="3.5" width="7" height="5" fill="#fff" stroke="#555"/></svg>
<svg class="a" style="left:1897px;top:113px" width="12" height="12" viewBox="0 0 12 12"><rect x="0.5" y="0.5" width="11" height="11" fill="#fff" stroke="#8a7040"/><rect x="1" y="1" width="10" height="2" fill="#5f9ed8"/></svg>
<div class="a" style="left:1314px;top:1014px;width:1px;height:21px;background:#a8acb8"></div>
<div class="a" style="left:1418px;top:1014px;width:1px;height:21px;background:#a8acb8"></div>
<div class="a" style="left:1516px;top:1014px;width:1px;height:21px;background:#a8acb8"></div>
<div class="t" style="left:1322px;top:1017px;font-size:13px;line-height:16px;color:#000;font-family:'Liberation Sans',sans-serif;">Writable</div>
<div class="t" style="left:1426px;top:1017px;font-size:13px;line-height:16px;color:#000;font-family:'Liberation Sans',sans-serif;">Smart Insert</div>
<div class="t" style="left:1524px;top:1017px;font-size:13px;line-height:16px;color:#000;font-family:'Liberation Sans',sans-serif;">9 : 20</div>
<svg class="a" style="left:1612px;top:1020px" width="2" height="15" viewBox="0 0 2 15"><rect x="0" y="0" width="2" height="2" fill="#888"/><rect x="0" y="4" width="2" height="2" fill="#888"/><rect x="0" y="8" width="2" height="2" fill="#888"/><rect x="0" y="12" width="2" height="2" fill="#888"/></svg>
<svg class="a" style="left:1900px;top:1020px" width="16" height="16" viewBox="0 0 16 16"><rect x="0.5" y="0.5" width="14.5" height="14.5" rx="3" fill="#f68a1e" stroke="#e07010"/><circle cx="4.5" cy="11.5" r="1.6" fill="#fff"/><path d="M3 7.5Q8 7.5 8.5 13M3 4Q11.5 4 12 13" stroke="#fff" stroke-width="1.8" fill="none"/></svg>
<div class="a" style="left:0px;top:1040px;width:1920px;height:40px;background:linear-gradient(90deg,#0b0b0b 0%,#141010 12%,#161211 45%,#141110 60%,#0c1012 75%,#061012 100%)"></div>
<svg class="a" style="left:16px;top:1052px" width="17" height="16" viewBox="0 0 17 16"><path d="M0 2.2L7 1.2V7.4H0ZM8 1.05L16.5 0V7.4H8ZM0 8.4H7V14.6L0 13.6ZM8 8.4H16.5V15.8L8 14.75Z" fill="#fff"/></svg>
<svg class="a" style="left:62px;top:1053px" width="21" height="14" viewBox="0 0 21 14"><rect x="4.6" y="0.6" width="11.8" height="12.8" fill="none" stroke="#fff" stroke-width="1.2"/><path d="M2.6 2.6H0.6V11.4H2.6M18.4 2.6H20.4V11.4H18.4" stroke="#fff" stroke-width="1.2" fill="none"/></svg>
<svg class="a" style="left:111px;top:1048px" width="24" height="23" viewBox="0 0 24 23"><circle cx="12.2" cy="11.5" r="11.2" fill="#f7941e"/><circle cx="13.8" cy="11.5" r="10.4" fill="#2c2255"/><path d="M4.5 15.5A10.4 10.4 0 0 0 23 15.5Z" fill="#3c3080"/><rect x="3.4" y="7.8" width="20.8" height="1.8" fill="#fff"/><rect x="3.4" y="10.9" width="20.8" height="1.8" fill="#fff"/><rect x="3.4" y="14" width="20.8" height="1.5" fill="#d0c8f0"/></svg>
<svg class="a" style="left:160px;top:1050px" width="25" height="20" viewBox="0 0 25 20"><path d="M0 6L12.5 0L25 6V19.5H0Z" fill="#fff"/><path d="M0.5 7L24.5 7L13 12Z" fill="#000"/><path d="M13 12L11 9L19 16Z" fill="#000"/></svg>
<svg class="a" style="left:209px;top:1050px" width="23" height="19" viewBox="0 0 23 19"><rect x="0.5" y="0.5" width="22" height="18" fill="#000" stroke="#9a9a9a"/><rect x="1" y="1" width="21" height="1.5" fill="#bbb"/><path d="M3 6Q2 6 2 7.5Q2 9 3 9M5 6V9M7 6L6.5 9M9 8.5H15" stroke="#aaa" stroke-width="0.9" fill="none"/></svg>
<svg class="a" style="left:258px;top:1048px" width="23" height="23" viewBox="0 0 23 23"><path d="M1.5 11.5Q2 1 12 1Q21.5 1 21.5 11V13H7Q7.5 18 13.5 18Q18 18 21 15.5V20.5Q17.5 22.5 13 22.5Q1.5 22.5 1.5 11.5ZM7 9H16Q15.5 5.5 11.5 5.5Q7.5 5.5 7 9Z" fill="#1a78d0"/><path d="M1.5 11Q4 3 11 3" stroke="#3a98e8" stroke-width="1.5" fill="none"/></svg>
<svg class="a" style="left:309px;top:1048px" width="20" height="24" viewBox="0 0 20 24"><rect x="0" y="0" width="19.5" height="19" rx="3.5" fill="#1a8ef0"/><path d="M11 18L14 23.5L15 18Z" fill="#1a8ef0"/><path fill="none" d="M9.75 3.5V15.5M4.5 6.5L15 12.5M15 6.5L4.5 12.5" stroke="#fff" stroke-width="2.6"/></svg>
<svg class="a" style="left:356px;top:1048px" width="24" height="24" viewBox="0 0 24 24"><defs><linearGradient id="bd" x1="0" y1="0" x2="0" y2="1"><stop offset="0" stop-color="#5ab4f0"/><stop offset="1" stop-color="#2a90e0"/></linearGradient></defs><rect x="0" y="0" width="24" height="24" fill="url(#bd)"/><circle cx="12" cy="8.5" r="4.2" fill="none" stroke="#fff" stroke-width="2.2"/><circle cx="7" cy="14.5" r="3.8" fill="none" stroke="#fff" stroke-width="2.2"/><path d="M13 15A3.8 3.8 0 1 0 17 11" fill="none" stroke="#fff" stroke-width="2.2"/></svg>
<svg class="a" style="left:405px;top:1048px" width="24" height="24" viewBox="0 0 24 24"><defs><linearGradient id="ut" x1="0" y1="0" x2="0" y2="1"><stop offset="0" stop-color="#2aa83a"/><stop offset="1" stop-color="#0a8a2a"/></linearGradient></defs><rect x="0.5" y="0.5" width="23" height="23" fill="#fff" stroke="#ccc"/><rect x="2" y="2" width="20" height="20" fill="url(#ut)"/><path d="M8.5 6V18M8.5 13Q8.5 15.5 11 15.5Q13.5 15.5 13.5 13V6M13.5 13Q13.5 15.5 16 15.5" stroke="#fff" stroke-width="2.3" fill="none"/></svg>
<svg class="a" style="left:453px;top:1050px" width="25" height="20" viewBox="0 0 25 20"><ellipse cx="9.5" cy="7.5" rx="9.5" ry="7.5" fill="#62c444"/><path d="M3 12L2 16L7 13.5Z" fill="#62c444"/><ellipse cx="17.5" cy="12.5" rx="7.5" ry="6" fill="#e8e8e8"/><path d="M20 17L22 20L17 18Z" fill="#e8e8e8"/><circle cx="6.5" cy="5" r="1.1" fill="#1a4a1a"/><circle cx="12.5" cy="5" r="1.1" fill="#1a4a1a"/><circle cx="15" cy="11" r="0.9" fill="#666"/><circle cx="20" cy="11" r="0.9" fill="#666"/></svg>
<svg class="a" style="left:503px;top:1050px" width="23" height="19" viewBox="0 0 23 19"><path d="M0 1H8.5L10.5 3H22.5V19H0Z" fill="#e8c060"/><rect x="0" y="4.5" width="22.5" height="14.5" fill="#fbe39a"/><rect x="0" y="2" width="8" height="1" fill="#5aa0e0"/><path d="M6 19V12H17V19H14V15H9V19Z" fill="#2a8ae8"/></svg>
<svg class="a" style="left:553px;top:1049px" width="23" height="23" viewBox="0 0 23 23"><circle cx="11.5" cy="11.5" r="11" fill="#db4437"/><path d="M11.5 11.5L21.03 6A11 11 0 0 1 11.5 22.5Z" fill="#f4c20d"/><path d="M11.5 11.5L11.5 22.5A11 11 0 0 1 1.97 6Z" fill="#0f9d58"/><circle cx="11.5" cy="11.5" r="5.2" fill="#fff"/><circle cx="11.5" cy="11.5" r="4" fill="#4285f4"/></svg>
<svg class="a" style="left:601px;top:1048px" width="25" height="24" viewBox="0 0 25 24"><ellipse cx="11.5" cy="10.5" rx="10.5" ry="6.5" transform="rotate(-20 11.5 10.5)" fill="#999"/><ellipse cx="12" cy="8.5" rx="10.5" ry="6.5" transform="rotate(-20 12 8.5)" fill="#fafafa" stroke="#e02828" stroke-width="1.3"/><path fill="none" d="M7 4L15 15M14 3L13 13" stroke="#888" stroke-width="0.9"/><ellipse cx="15" cy="19" rx="2.2" ry="3.5" transform="rotate(20 15 19)" fill="none" stroke="#2a8ae0" stroke-width="1.5"/><ellipse cx="20" cy="16.5" rx="3" ry="2.2" transform="rotate(20 20 16.5)" fill="none" stroke="#2a8ae0" stroke-width="1.5"/></svg>
<svg class="a" style="left:650px;top:1048px" width="24" height="23" viewBox="0 0 24 23"><path d="M3 17A11 11 0 1 1 8 21.5L1 22.5Z" fill="#1ab8e8"/><circle cx="12.5" cy="11" r="9" fill="#3ad0f8"/><circle cx="12.5" cy="5.5" r="2.3" fill="#108ac0"/><circle cx="7.5" cy="9.5" r="2.3" fill="#108ac0"/><circle cx="17.5" cy="9.5" r="2.3" fill="#108ac0"/><circle cx="9.5" cy="15.5" r="2.3" fill="#108ac0"/><circle cx="15.5" cy="15.5" r="2.3" fill="#108ac0"/><circle cx="12.5" cy="11" r="1.2" fill="#108ac0"/></svg>
<svg class="a" style="left:700px;top:1048px" width="22" height="24" viewBox="0 0 22 24"><defs><linearGradient id="np" x1="0" y1="0" x2="0" y2="1"><stop offset="0.3" stop-color="#f4f8f0"/><stop offset="1" stop-color="#40b020"/></linearGradient></defs><path d="M0.5 1.5H14L19.5 7V23.5H0.5Z" fill="url(#np)" stroke="#999"/><path fill="none" d="M5 8V15M7 11H9M10 11H12" stroke="#333" stroke-width="1.1"/><path d="M20.5 1L22 2.5L12.5 18L11 19L11.5 17Z" fill="#f0b020" stroke="#a06010" stroke-width="0.6"/></svg>
<svg class="a" style="left:749px;top:1048px" width="23" height="23" viewBox="0 0 23 23"><circle cx="11.5" cy="12" r="10.5" fill="#ff5a1a"/><circle cx="12" cy="12.5" r="7" fill="#5a2ab0"/><path d="M4 6Q1 13 6 19Q12 24 18 20Q23 15 21 8Q19 3 16 1Q20 7 17 12Q14 16 9 14Q6 12 8 9Q5 9 4 6Z" fill="#ff8a10"/><path d="M16 1Q22 4 22 11" stroke="#ffcc20" stroke-width="2" fill="none"/></svg>
<svg class="a" style="left:798px;top:1048px" width="23" height="24" viewBox="0 0 23 24"><circle cx="11" cy="12.5" r="10.5" fill="#ea5548"/><path d="M3 4L8 1L7 5Z" fill="#ea5548"/><circle cx="12" cy="9" r="4" fill="#fff"/><circle cx="12.5" cy="9" r="1.6" fill="#222"/><path d="M15 10L19 12L15 14Z" fill="#f8c020"/><circle cx="17" cy="17" r="2" fill="#111"/></svg>
<svg class="a" style="left:846px;top:1047px" width="25" height="25" viewBox="0 0 25 25"><circle cx="12.5" cy="12.5" r="12" fill="#e8f0fa"/><circle cx="12.5" cy="12.5" r="10" fill="#1a7ae0"/><path d="M4 11Q6 4 14 4Q20 4 22 9" stroke="#a8d8f8" stroke-width="2" fill="none"/><path d="M6 14Q8 8 15 9V5.5L21 11.5L15 17.5V13.5Q10 13 6 14Z" fill="#fff"/></svg>
<svg class="a" style="left:896px;top:1048px" width="23" height="23" viewBox="0 0 23 23"><circle cx="11.5" cy="11.5" r="11" fill="#f8d020"/><path fill="none" d="M12 4V15" stroke="#20b070" stroke-width="2.2"/><ellipse cx="9" cy="16" rx="3.8" ry="3" fill="#20b070"/><path d="M12 4Q17 5 16.5 10Q15 7 12 7.5" fill="#20b070"/></svg>
<svg class="a" style="left:945px;top:1048px" width="23" height="23" viewBox="0 0 23 23"><rect x="9" y="3" width="13" height="17" fill="#fff"/><path fill="none" d="M11 6H21M11 8.5H21M11 11H21M11 13.5H21M11 16H21" stroke="#2a5aa0" stroke-width="0.9"/><path d="M0 3.5L13 0.5V22.5L0 19.5Z" fill="#2a5aa0"/><path d="M2.5 8L4 15L6.5 10.5L9 15L10.5 8" stroke="#fff" stroke-width="1.3" fill="none"/></svg>
<div class="a" style="left:981px;top:1040px;width:48px;height:40px;background:linear-gradient(#4a4a4a,#3a3a3a)"></div>
<svg class="a" style="left:993px;top:1048px" width="24" height="23" viewBox="0 0 24 23"><circle cx="12.2" cy="11.5" r="11.2" fill="#f7941e"/><circle cx="13.8" cy="11.5" r="10.4" fill="#2c2255"/><path d="M4.5 15.5A10.4 10.4 0 0 0 23 15.5Z" fill="#3c3080"/><rect x="3.4" y="7.8" width="20.8" height="1.8" fill="#fff"/><rect x="3.4" y="10.9" width="20.8" height="1.8" fill="#fff"/><rect x="3.4" y="14" width="20.8" height="1.5" fill="#d0c8f0"/></svg>
<svg class="a" style="left:1042px;top:1048px" width="23" height="23" viewBox="0 0 23 23"><defs><radialGradient id="wf" cx="0.5" cy="0.35" r="0.6"><stop offset="0" stop-color="#8ae040"/><stop offset="1" stop-color="#20a020"/></radialGradient></defs><circle cx="11.5" cy="11.5" r="11" fill="#ddd"/><circle cx="11.5" cy="11.5" r="10" fill="url(#wf)"/><path d="M4.5 9.5Q11.5 3.5 18.5 9.5M7 12.5Q11.5 8.5 16 12.5" stroke="#fff" stroke-width="2" fill="none"/><circle cx="11.5" cy="16" r="1.8" fill="#fff"/></svg>
<div class="a" style="left:250px;top:1077px;width:40px;height:3px;background:#76b9b0"></div>
<div class="a" style="left:299px;top:1077px;width:40px;height:3px;background:#76b9b0"></div>
<div class="a" style="left:495px;top:1077px;width:39px;height:3px;background:#76b9b0"></div>
<div class="a" style="left:544px;top:1077px;width:40px;height:3px;background:#76b9b0"></div>
<div class="a" style="left:593px;top:1077px;width:40px;height:3px;background:#76b9b0"></div>
<div class="a" style="left:740px;top:1077px;width:40px;height:3px;background:#76b9b0"></div>
<div class="a" style="left:936px;top:1077px;width:40px;height:3px;background:#76b9b0"></div>
<div class="a" style="left:981px;top:1077px;width:48px;height:3px;background:#76b9b0"></div>
<div class="a" style="left:1034px;top:1077px;width:40px;height:3px;background:#76b9b0"></div>
<svg class="a" style="left:1596px;top:1051px" width="16" height="16" viewBox="0 0 16 16"><circle cx="11" cy="4" r="3" fill="none" stroke="#fff" stroke-width="1.2"/><path d="M6 13Q7 8 11 8Q15 8 16 13" stroke="#fff" stroke-width="1.2" fill="none"/><circle cx="5" cy="8" r="2.5" fill="none" stroke="#fff" stroke-width="1.2"/><path d="M0.5 16Q1 11 5 11Q9 11 9.5 16" stroke="#fff" stroke-width="1.2" fill="none"/></svg>
<svg class="a" style="left:1633px;top:1055px" width="14" height="8" viewBox="0 0 14 8"><path d="M1 7L7 1L13 7" stroke="#fff" stroke-width="1.3" fill="none"/></svg>
<svg class="a" style="left:1655px;top:1054px" width="17" height="10" viewBox="0 0 17 10"><path d="M3 10Q0 10 0 7.5Q0 5 3 5Q4 1 8 1Q12 1 13 5Q17 5 17 7.5Q17 10 14 10Z" fill="#999"/></svg>
<svg class="a" style="left:1680px;top:1051px" width="16" height="17" viewBox="0 0 16 17"><path d="M8 0L16 3V9Q16 14 8 17Q0 14 0 9V3Z" fill="#1a7ae8"/><path d="M8 2L14 4V9Q14 13 8 15Q2 13 2 9V4Z" fill="#fff"/><path d="M3 6L8 10L13 6" stroke="#1a7ae8" stroke-width="2" fill="none"/></svg>
<svg class="a" style="left:1703px;top:1052px" width="18" height="15" viewBox="0 0 18 15"><rect x="5.5" y="0.5" width="12" height="10" fill="none" stroke="#fff" stroke-width="1.1"/><rect x="0.5" y="0.5" width="4" height="6" fill="none" stroke="#fff"/><path fill="none" d="M11.5 11V14M8 14.5H15M3 7V12" stroke="#fff" stroke-width="1.1"/></svg>
<svg class="a" style="left:1728px;top:1053px" width="16" height="12" viewBox="0 0 16 12"><rect x="5.5" y="3.5" width="10" height="7" fill="none" stroke="#fff"/><rect x="7" y="5" width="7" height="4" fill="#fff"/><path fill="none" d="M0 5H4M2 2V8" stroke="#fff" stroke-width="1.3"/></svg>
<svg class="a" style="left:1752px;top:1052px" width="17" height="15" viewBox="0 0 17 15"><path d="M0.5 5H3L7.5 1V14L3 10H0.5Z" fill="none" stroke="#fff"/><path d="M10 5Q11.5 7.5 10 10M12.5 3Q15 7.5 12.5 12M15 1Q18.5 7.5 15 14" stroke="#bbb" fill="none"/></svg>
<svg class="a" style="left:1777px;top:1053px" width="15" height="15" viewBox="0 0 15 15"><path fill="none" d="M1 2.5H14M4.5 0.5V4.5M10.5 0.5V4.5M3 9.5V6H12V9.5M7.5 4.5V10M0.5 10H14.5M7.5 10Q6 13.5 1.5 14.5M7.5 10Q9 13.5 13.5 14.5" stroke="#fff" stroke-width="1.1"/></svg>
<div class="t" style="left:1815px;top:1043px;font-size:13px;line-height:16px;color:#fff;font-family:'Liberation Sans',sans-serif;">22:40</div>
<div class="t" style="left:1801px;top:1062px;font-size:13px;line-height:16px;color:#fff;font-family:'Liberation Sans',sans-serif;">2018/3/21</div>
<svg class="a" style="left:1879px;top:1051px" width="25" height="22" viewBox="0 0 25 22"><path d="M0.5 0.5H16.5V12.5H7L4 15.5V12.5H0.5Z" fill="#fff"/><path fill="none" d="M3 3.5H14M3 6H14M3 8.5H14" stroke="#222"/><circle cx="17" cy="14" r="7" fill="#3a3a3a" stroke="#666"/><text x="17" y="18.5" font-size="11" font-family="Liberation Sans" font-weight="bold" fill="#fff" text-anchor="middle">4</text></svg>
<div class="a" style="left:1915px;top:1040px;width:1px;height:40px;background:#555"></div>
</body></html>
